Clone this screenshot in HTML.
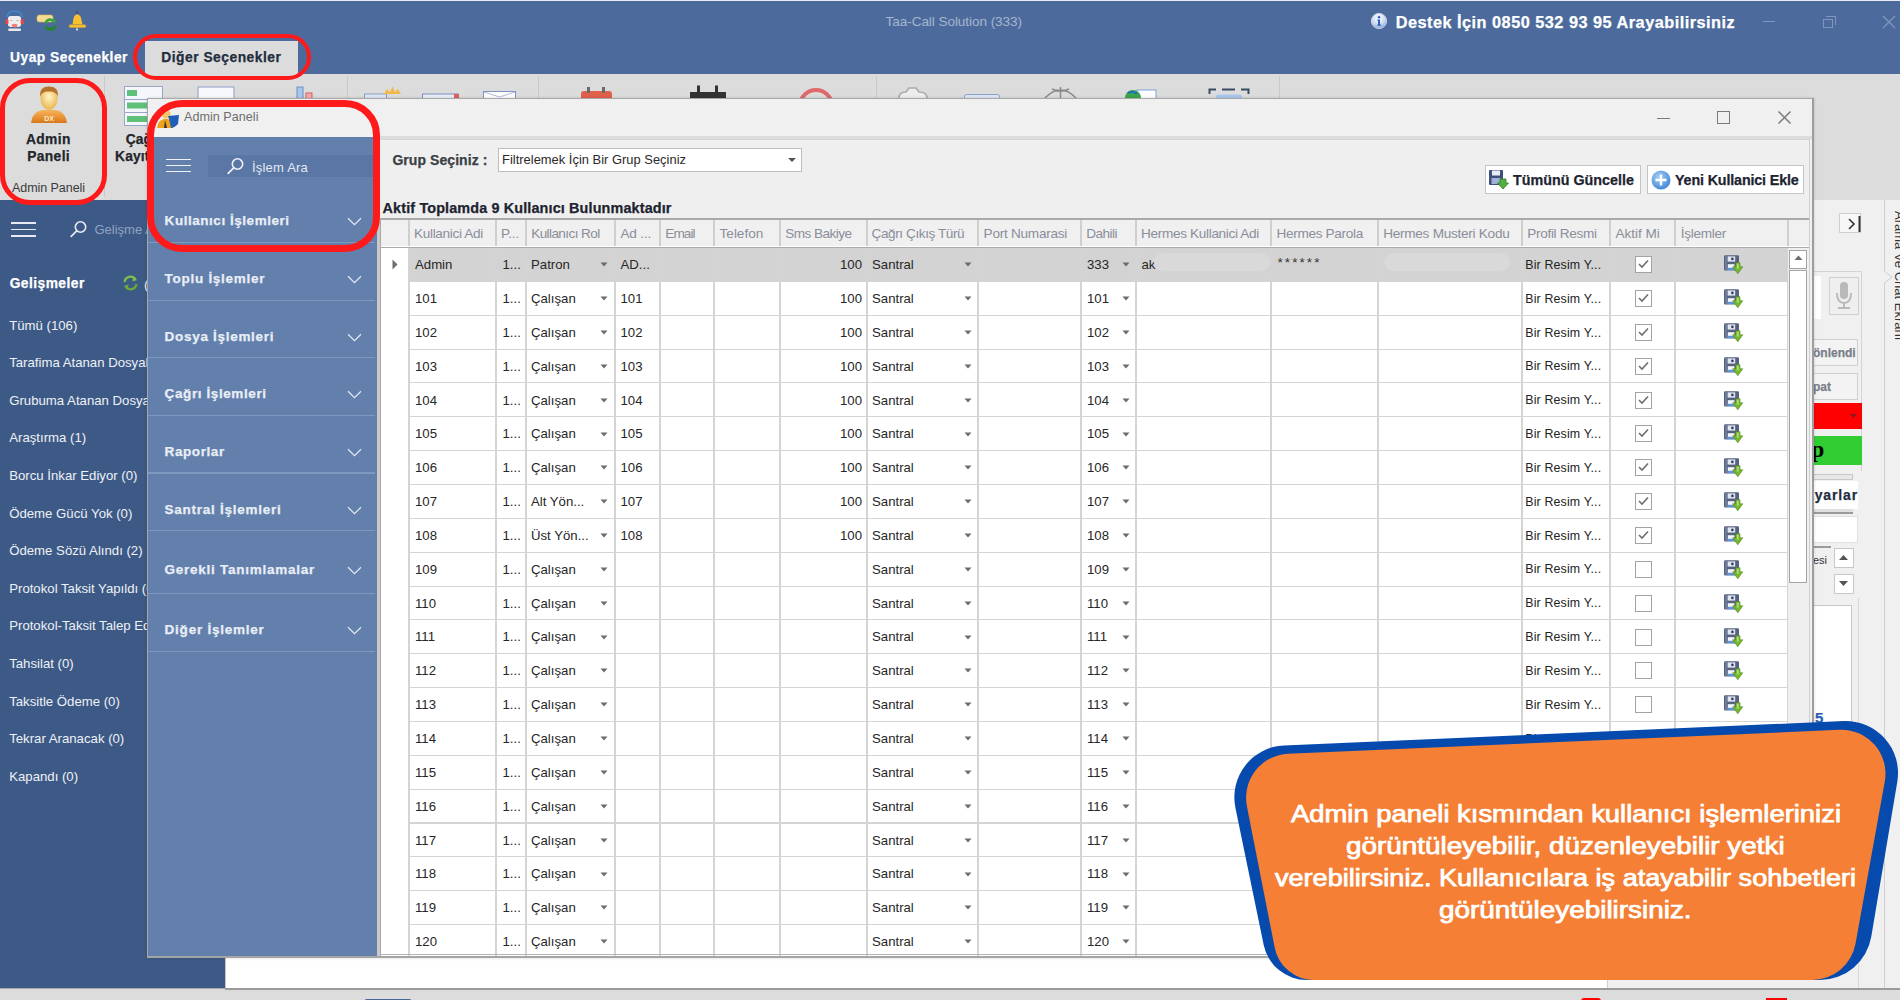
<!DOCTYPE html>
<html><head><meta charset="utf-8"><title>Admin Paneli</title><style>*{box-sizing:border-box;margin:0;padding:0}
html,body{width:1900px;height:1000px;overflow:hidden;background:#dcdcdc;font-family:"Liberation Sans",sans-serif;position:relative}
.a{position:absolute}
.t{position:absolute;white-space:nowrap;line-height:1}
</style></head><body>
<div class="a" style="left:0;top:0;width:1900px;height:1px;background:#e9edf3"></div>
<div class="a" style="left:0;top:1px;width:1900px;height:72.5px;background:#4c6b9c"></div>
<svg class="a" style="left:0;top:0" width="100" height="40" viewBox="0 0 100 40">
      <path d="M7.2 17 Q7.2 11.2 14.6 11.2 Q22 11.2 22 17" fill="none" stroke="#3a8ccc" stroke-width="1.6"/>
      <rect x="7.9" y="16" width="13.2" height="11" rx="3" fill="#eeeeee"/>
      <rect x="5.3" y="19.3" width="3.2" height="5" rx="1.3" fill="#e84848"/>
      <rect x="20.6" y="19.3" width="3.2" height="5" rx="1.3" fill="#e84848"/>
      <path d="M10.5 20.5 H12.5 M16.5 20.5 H18.5" stroke="#9a9a9a" stroke-width="0.8"/>
      <ellipse cx="14.6" cy="25.6" rx="2.9" ry="1.8" fill="#f27a7a"/>
      <rect x="8.2" y="28.4" width="12.8" height="2.6" rx="1" fill="#e9e9e9"/>
      <rect x="37" y="15" width="16" height="7" rx="2.5" fill="#f6dc92" stroke="#e2b65a" stroke-width="0.6"/>
      <path d="M45.8 23 A4.7 4.7 0 0 1 54.2 21.6" fill="none" stroke="#3aa53c" stroke-width="2.8"/><path d="M55.2 26 A4.7 4.7 0 0 1 46.8 27.4" fill="none" stroke="#23882a" stroke-width="2.8"/><path d="M52.3 19.2 L56.3 20.6 L54.2 24.2Z" fill="#3aa53c"/><path d="M48.7 29.8 L44.7 28.4 L46.8 24.8Z" fill="#23882a"/>
      <circle cx="77" cy="12.5" r="1.2" fill="none" stroke="#444" stroke-width="0.7"/>
      <path d="M73 24.2 Q73.5 14.5 77 14.5 Q80.5 14.5 81.8 24.2Z" fill="#f7c531"/>
      <path d="M70.8 24.2 L83.4 24.2 L81.8 20 Q81 16 77 14.5" fill="none"/>
      <path d="M72.5 24.2 L74 17 Q75.5 14.6 77 14.6 Q79 14.6 80.8 17 L82.4 24.2Z" fill="#f6c22e"/>
      <rect x="69.2" y="24.7" width="16.6" height="2.8" rx="1.2" fill="#f3bf36" stroke="#e0a22a" stroke-width="0.5"/>
      <rect x="76" y="28.4" width="2" height="2" fill="#d8d8d8"/>
    </svg>
<div class="t" style="left:885.50px;top:14.79px;font-size:13.6px;color:#a5b5cf;letter-spacing:-0.077px;">Taa-Call Solution (333)</div>
<svg class="a" style="left:1370px;top:12px" width="18" height="18" viewBox="0 0 18 18"><defs><radialGradient id="gi" cx="0.45" cy="0.3" r="0.75"><stop offset="0" stop-color="#ffffff"/><stop offset="0.6" stop-color="#c9d8f0"/><stop offset="1" stop-color="#6f95d2"/></radialGradient></defs><circle cx="9" cy="9" r="7.6" fill="url(#gi)" stroke="#dfe6f2" stroke-width="0.8"/><circle cx="9" cy="5.3" r="1.3" fill="#2d62b8"/><path d="M7.4 7.6 H10 V12.6 H11 V13.8 H7.2 V12.6 H8.1 V8.8 H7.4Z" fill="#2d62b8"/></svg>
<div class="t" style="left:1395.70px;top:13.50px;font-size:16.3px;color:#ffffff;font-weight:700;letter-spacing:0.491px;-webkit-text-stroke-width:0.25px;">Destek İçin 0850 532 93 95 Arayabilirsiniz</div>
<div class="a" style="left:1763px;top:21px;width:12px;height:1.3px;background:#7f95bb"></div>
<div class="a" style="left:1823px;top:19px;width:10px;height:9px;border:1.3px solid #7f95bb"></div><div class="a" style="left:1826px;top:16px;width:10px;height:9px;border-top:1.3px solid #7f95bb;border-right:1.3px solid #7f95bb"></div>
<svg class="a" style="left:1881px;top:14px" width="16" height="16" viewBox="0 0 16 16"><path d="M2 2L14 14M14 2L2 14" stroke="#7f95bb" stroke-width="1.4"/></svg>
<div class="t" style="left:10.00px;top:51.02px;font-size:13.8px;color:#ffffff;font-weight:700;letter-spacing:0.503px;-webkit-text-stroke-width:0.25px;">Uyap Seçenekler</div>
<div class="a" style="left:145px;top:41px;width:153px;height:33px;background:#dcdcdc"></div>
<div class="t" style="left:161.30px;top:50.72px;font-size:13.8px;color:#1f2d3d;font-weight:700;letter-spacing:0.501px;-webkit-text-stroke-width:0.25px;">Diğer Seçenekler</div>
<div class="a" style="left:0;top:73.5px;width:1900px;height:126px;background:#dcdcdc"></div>
<div class="a" style="left:104px;top:76px;width:1px;height:121px;background:#c9c9c9"></div>
<div class="a" style="left:347px;top:76px;width:1px;height:121px;background:#c9c9c9"></div>
<div class="a" style="left:538px;top:76px;width:1px;height:121px;background:#c9c9c9"></div>
<div class="a" style="left:876px;top:76px;width:1px;height:121px;background:#c9c9c9"></div>
<div class="a" style="left:1279px;top:76px;width:1px;height:121px;background:#c9c9c9"></div>
<svg class="a" style="left:28px;top:85px" width="42" height="42" viewBox="0 0 42 42">
      <defs><linearGradient id="gb" x1="0" y1="0" x2="0" y2="1"><stop offset="0" stop-color="#f7b45a"/><stop offset="1" stop-color="#d9781c"/></linearGradient>
      <radialGradient id="gf" cx="0.5" cy="0.4" r="0.6"><stop offset="0" stop-color="#fff6c8"/><stop offset="1" stop-color="#e9b54c"/></radialGradient></defs>
      <path d="M3 38 Q4 27 14 25 L28 25 Q38 27 39 38 Z" fill="url(#gb)"/>
      <ellipse cx="21" cy="14" rx="8.5" ry="11" fill="url(#gf)"/>
      <path d="M12 12 Q11 1 21 1.5 Q31 1 30 12 Q28 6 21 6.5 Q14 6 12 12Z" fill="#b8732b"/>
      <text x="21" y="36" font-size="7" font-family="Liberation Sans" font-weight="700" fill="#fde9c0" text-anchor="middle">DX</text>
    </svg>
<div class="t" style="left:26.00px;top:133.32px;font-size:13.8px;color:#22262b;font-weight:700;letter-spacing:0.356px;-webkit-text-stroke-width:0.25px;">Admin</div>
<div class="t" style="left:27.30px;top:150.02px;font-size:13.8px;color:#22262b;font-weight:700;letter-spacing:0.341px;-webkit-text-stroke-width:0.25px;">Paneli</div>
<div class="t" style="left:12.00px;top:182.42px;font-size:12.5px;color:#3a3a3a;letter-spacing:-0.055px;">Admin Paneli</div>
<svg class="a" style="left:124px;top:86px" width="40" height="40" viewBox="0 0 40 40">
      <rect x="0.5" y="0.5" width="38" height="39" fill="#f4f6fb" stroke="#9aa6c8"/>
      <rect x="0.5" y="13" width="38" height="1" fill="#9aa6c8"/><rect x="0.5" y="26" width="38" height="1" fill="#9aa6c8"/>
      <rect x="3" y="4" width="10" height="6" fill="#5fc07a"/>
      <rect x="3" y="16.5" width="33" height="6" fill="#5fc07a"/>
      <rect x="3" y="30" width="33" height="6" fill="#5fc07a"/>
    </svg>
<div class="t" style="left:125.70px;top:133.32px;font-size:13.8px;color:#22262b;font-weight:700;letter-spacing:0.144px;-webkit-text-stroke-width:0.25px;">Çağrı</div>
<div class="t" style="left:115.00px;top:150.02px;font-size:13.8px;color:#22262b;font-weight:700;letter-spacing:0.172px;-webkit-text-stroke-width:0.25px;">Kayıtları</div>
<svg class="a" style="left:0;top:84px" width="1300" height="14" viewBox="0 0 1300 14">
      <rect x="198" y="3" width="36" height="12" fill="#f6f8fc" stroke="#8e9cc4"/>
      <rect x="297" y="3" width="6" height="12" fill="#a9c7ee" stroke="#6f8fc3"/>
      <rect x="306" y="9" width="6" height="6" fill="#f4a9a9" stroke="#d46060"/>
      <rect x="364.5" y="10" width="22" height="6" fill="#dfe6f4" stroke="#8e9cc4"/>
      <path d="M384 10 L387 5 L390 8 L392.5 2.5 L395 8 L398 5 L401 10Z" fill="#f2b84b"/>
      <rect x="422.5" y="10" width="36" height="6" fill="#e9eef8" stroke="#7b8fc0"/>
      <rect x="454" y="10" width="5" height="5" fill="#e06060"/>
      <rect x="483.5" y="7.5" width="32" height="8" fill="#ffffff" stroke="#7f93c6"/>
      <path d="M484 8 L499.5 13 L515 8" fill="none" stroke="#9aa8d0" stroke-width="0.8"/>
      <rect x="581" y="7" width="31" height="10" rx="3" fill="#e0604c"/>
      <rect x="587" y="3" width="3" height="6" fill="#6b6b6b"/><rect x="602" y="3" width="3" height="6" fill="#6b6b6b"/>
      <rect x="690" y="8" width="36" height="8" fill="#333333"/>
      <rect x="697" y="1.5" width="3" height="7" fill="#333333"/><rect x="715" y="1.5" width="3" height="7" fill="#333333"/>
      <circle cx="816" cy="22" r="16" fill="none" stroke="#e06a6a" stroke-width="4"/>
      <path d="M899 14 Q899 8 906 8 L909 4 L916 4 L919 8 Q927 8 927 14" fill="#eeeeee" stroke="#a9a9a9" stroke-width="1.6"/>
      <rect x="964.5" y="10.5" width="35" height="6" rx="2" fill="#dfe6f4" stroke="#8aa0c8"/>
      <path d="M1045 14 Q1060.5 -2 1076 14 M1060.5 3 L1060.5 14 M1052 5 Q1060.5 9 1069 5" fill="none" stroke="#8a8a8a" stroke-width="1.5"/>
      <rect x="1137" y="6" width="19" height="10" fill="#fff" stroke="#7aa0d8"/>
      <circle cx="1133" cy="14" r="8" fill="#3ea44c"/><path d="M1128 9 Q1133 6 1137 10" stroke="#1f6fc0" stroke-width="2" fill="none"/>
      <path d="M1209.5 10 V5.5 H1216 M1222 5.5 H1235 M1241 5.5 H1248.5 V10" fill="none" stroke="#394a64" stroke-width="2"/>
      <rect x="1216" y="10.5" width="26" height="6" rx="2" fill="#a9c7ee"/>
    </svg>
<div class="a" style="left:0;top:199.5px;width:225px;height:789.5px;background:#3d5a86"></div>
<div class="a" style="left:10.5px;top:222px;width:25.5px;height:1.6px;background:#e6ebf3"></div>
<div class="a" style="left:10.5px;top:228.5px;width:25.5px;height:1.6px;background:#e6ebf3"></div>
<div class="a" style="left:10.5px;top:235px;width:25.5px;height:1.6px;background:#e6ebf3"></div>
<svg class="a" style="left:70px;top:220px" width="18" height="18" viewBox="0 0 18 18"><circle cx="10.5" cy="7" r="5.2" fill="none" stroke="#e6ebf3" stroke-width="1.6"/><path d="M6.7 10.8 L1.2 16.3" stroke="#e6ebf3" stroke-width="1.8" stroke-linecap="round"/></svg>
<div class="t" style="left:94.50px;top:223.00px;font-size:13px;color:#8fa3c3;">Gelişme Ara</div>
<div class="t" style="left:9.70px;top:277.32px;font-size:13.8px;color:#ffffff;font-weight:700;letter-spacing:0.444px;-webkit-text-stroke-width:0.25px;">Gelişmeler</div>
<svg class="a" style="left:122px;top:275px" width="17" height="16" viewBox="0 0 17 16"><path d="M2.5 7 A6 6 0 0 1 13.5 4.5" fill="none" stroke="#7cc04a" stroke-width="2.2"/><path d="M11 1.5 L15 5 L10.5 6.5Z" fill="#7cc04a"/><path d="M14.5 9 A6 6 0 0 1 3.5 11.5" fill="none" stroke="#6aaa3a" stroke-width="2.2"/><path d="M6 14.5 L2 11 L6.5 9.5Z" fill="#6aaa3a"/></svg>
<div class="t" style="left:144.00px;top:277.66px;font-size:13.4px;color:#eef1f6;">(</div>
<div class="t" style="left:9.20px;top:318.63px;font-size:13.2px;color:#eef1f6;">Tümü (106)</div>
<div class="t" style="left:9.20px;top:356.23px;font-size:13.2px;color:#eef1f6;">Tarafima Atanan Dosyalar</div>
<div class="t" style="left:9.20px;top:393.83px;font-size:13.2px;color:#eef1f6;">Grubuma Atanan Dosyalar</div>
<div class="t" style="left:9.20px;top:431.43px;font-size:13.2px;color:#eef1f6;">Araştırma (1)</div>
<div class="t" style="left:9.20px;top:469.03px;font-size:13.2px;color:#eef1f6;">Borcu İnkar Ediyor (0)</div>
<div class="t" style="left:9.20px;top:506.63px;font-size:13.2px;color:#eef1f6;">Ödeme Gücü Yok (0)</div>
<div class="t" style="left:9.20px;top:544.23px;font-size:13.2px;color:#eef1f6;">Ödeme Sözü Alındı (2)</div>
<div class="t" style="left:9.20px;top:581.83px;font-size:13.2px;color:#eef1f6;">Protokol Taksit Yapıldı (0)</div>
<div class="t" style="left:9.20px;top:619.43px;font-size:13.2px;color:#eef1f6;">Protokol-Taksit Talep Edildi</div>
<div class="t" style="left:9.20px;top:657.03px;font-size:13.2px;color:#eef1f6;">Tahsilat (0)</div>
<div class="t" style="left:9.20px;top:694.63px;font-size:13.2px;color:#eef1f6;">Taksitle Ödeme (0)</div>
<div class="t" style="left:9.20px;top:732.23px;font-size:13.2px;color:#eef1f6;">Tekrar Aranacak (0)</div>
<div class="t" style="left:9.20px;top:769.83px;font-size:13.2px;color:#eef1f6;">Kapandı (0)</div>
<div class="a" style="left:225px;top:199.5px;width:1382px;height:789px;background:#ffffff;border-left:1px solid #c8c8c8"></div>
<div class="a" style="left:1607px;top:199.5px;width:293px;height:789px;background:#f0f0f0;border-left:1px solid #cfcfcf"></div>
<div class="a" style="left:1884px;top:199.5px;width:1px;height:789px;background:#d0d0d0"></div>
<div class="a" style="left:0;top:988px;width:1900px;height:12px;background:#dcdcdc;border-top:1.5px solid #a9a9a9"></div>
<div class="a" style="left:225px;top:988px;width:1675px;height:2px;background:#9a9a9a"></div>
<div class="a" style="left:364px;top:998.8px;width:48px;height:6px;border-radius:3px;background:#4a6796"></div>
<div class="a" style="left:1581px;top:998px;width:20px;height:6px;border-radius:4px;background:#fe0000"></div>
<div class="a" style="left:1766px;top:998px;width:21px;height:6px;background:#fe0000"></div>
<div class="a" style="left:1839px;top:213px;width:22px;height:20px;background:#f7f7f7;border:1px solid #cfcfcf"></div>
<svg class="a" style="left:1843px;top:216px" width="18" height="16" viewBox="0 0 18 16"><path d="M6 3 L11 8 L6 13" fill="none" stroke="#333" stroke-width="1.6"/><rect x="15.5" y="0" width="2" height="16" fill="#333"/></svg>
<div class="t" style="left:1894px;top:211px;font-size:13px;color:#333;transform-origin:0 0;transform:rotate(90deg) translate(0,-12px);">Arama Ve Chat Ekranı</div>
<svg class="a" style="left:1884px;top:255px" width="10" height="40" viewBox="0 0 10 40"><path d="M0 0 L0 16 L8 22 L0 28 L0 40" fill="#f0f0f0" stroke="#cfcfcf"/></svg>
<div class="a" style="left:1800px;top:271px;width:62px;height:200px;border:1px solid #d4d4d4;border-left:none;border-bottom:none"></div><div class="a" style="left:1857.5px;top:598px;width:1px;height:390px;background:#d8d8d8"></div>
<div class="a" style="left:1800px;top:276px;width:20.5px;height:43px;background:#ffffff"></div>
<div class="a" style="left:1828.5px;top:277px;width:30px;height:38px;background:#efefef;border:1px solid #cfcfcf"></div>
<svg class="a" style="left:1833.5px;top:281px" width="20" height="30" viewBox="0 0 20 30"><rect x="6" y="1" width="8" height="17" rx="4" fill="#b9b9b9"/><path d="M3 12 Q3 22 10 22 Q17 22 17 12" fill="none" stroke="#b9b9b9" stroke-width="2"/><rect x="9" y="22" width="2" height="4" fill="#b9b9b9"/><rect x="4" y="26" width="12" height="2" fill="#b9b9b9"/></svg>
<div class="a" style="left:1790px;top:339px;width:68px;height:27px;background:#f3f3f3;border:1px solid #d0d0d0"></div>
<div class="t" style="left:1813.00px;top:346.84px;font-size:12px;color:#7a7f8a;font-weight:700;-webkit-text-stroke-width:0.25px;">önlendi</div>
<div class="a" style="left:1790px;top:373px;width:68px;height:27px;background:#f3f3f3;border:1px solid #d0d0d0"></div>
<div class="t" style="left:1813.00px;top:380.84px;font-size:12px;color:#7a7f8a;font-weight:700;-webkit-text-stroke-width:0.25px;">pat</div>
<div class="a" style="left:1800px;top:403px;width:61.5px;height:25.7px;background:#fe0000"></div>
<svg class="a" style="left:1850px;top:414px" width="8" height="5"><path d="M0 0H7L3.5 4Z" fill="#8a1a1a"/></svg>
<div class="a" style="left:1800px;top:436px;width:62px;height:29px;background:#32cd32"></div>
<div class="t" style="left:1811.00px;top:437.18px;font-size:24px;color:#000;font-weight:700;font-family:'Liberation Serif',serif;">p</div>
<div class="a" style="left:1790px;top:474px;width:63px;height:6px;background:#e8e8e8;border:1px solid #c8c8c8"></div>
<div class="a" style="left:1790px;top:481px;width:68px;height:28px;background:#ffffff"></div>
<div class="t" style="left:1806.00px;top:488.15px;font-size:14px;color:#1f2d3d;font-weight:700;letter-spacing:0.866px;-webkit-text-stroke-width:0.25px;">ayarlar</div>
<div class="a" style="left:1790px;top:509px;width:63px;height:5px;background:#e0e0e0;border-bottom:2px solid #9a9a9a"></div>
<div class="a" style="left:1790px;top:516px;width:68px;height:27px;background:#fff;border:1px solid #e0e0e0"></div>
<div class="a" style="left:1805px;top:546px;width:26px;height:2px;background:#9a9a9a"></div>
<div class="t" style="left:1813.00px;top:554.69px;font-size:11px;color:#333;">esi</div>
<div class="a" style="left:1834px;top:548px;width:20px;height:20px;background:#fff;border:1px solid #c8c8c8"></div>
<svg class="a" style="left:1839px;top:555px" width="10" height="6"><path d="M0 5H9L4.5 0Z" fill="#555"/></svg>
<div class="a" style="left:1834px;top:574px;width:20px;height:20px;background:#fff;border:1px solid #c8c8c8"></div>
<svg class="a" style="left:1839px;top:581px" width="10" height="6"><path d="M0 0H9L4.5 5Z" fill="#555"/></svg>
<div class="a" style="left:1800px;top:605px;width:52px;height:360px;background:#fff;border:1px solid #c8c8c8;border-left:none"></div>
<div class="t" style="left:1815.00px;top:710.30px;font-size:15px;color:#2b5fb4;font-weight:700;-webkit-text-stroke-width:0.25px;">5</div>
<div class="a" style="left:147px;top:97.5px;width:1666.5px;height:860.5px;background:#f0f0f0;border:1px solid #a8a8a8;box-shadow:0 0 3px rgba(0,0,0,0.15)"></div>
<svg class="a" style="left:156px;top:107px" width="24" height="22" viewBox="0 0 24 22">
      <path d="M1 21 Q2 13 8 12 L12 12 Q16 13 17 21Z" fill="#f0a21c"/>
      <circle cx="10" cy="7" r="4.5" fill="#f3c56a"/>
      <path d="M12 9 L23 8 L22 17 Q18 21 15 21 L13 12Z" fill="#1f5fb8"/>
      <path d="M9 13 L11 21 L8 21Z" fill="#333"/>
    </svg>
<div class="t" style="left:184.00px;top:111.33px;font-size:12.6px;color:#6e6e6e;letter-spacing:0.023px;">Admin Paneli</div>
<div class="a" style="left:1657px;top:117.5px;width:12.5px;height:1.2px;background:#7a7a7a"></div>
<div class="a" style="left:1717px;top:111px;width:13px;height:13px;border:1.4px solid #7a7a7a"></div>
<svg class="a" style="left:1777px;top:110px" width="15" height="15" viewBox="0 0 15 15"><path d="M1.5 1.5L13.5 13.5M13.5 1.5L1.5 13.5" stroke="#7a7a7a" stroke-width="1.5"/></svg>
<div class="a" style="left:377px;top:136px;width:1436px;height:2.5px;background:#dcdcdc"></div>
<div class="a" style="left:378px;top:138.5px;width:1432px;height:819px;background:#efefef;border-top:1px solid #d6d6d6;border-right:1px solid #d0d0d0"></div>
<div class="a" style="left:147.5px;top:136.5px;width:230px;height:821.5px;background:#6380ad"></div>
<div class="a" style="left:377px;top:136.5px;width:3px;height:821.5px;background:#c9c9c9"></div>
<div class="a" style="left:165.5px;top:158.7px;width:25.3px;height:1.6px;background:#eef1f7"></div>
<div class="a" style="left:165.5px;top:164.7px;width:25.3px;height:1.6px;background:#eef1f7"></div>
<div class="a" style="left:165.5px;top:170.7px;width:25.3px;height:1.6px;background:#eef1f7"></div>
<div class="a" style="left:208px;top:155.3px;width:169px;height:22px;background:#5a76a4"></div>
<svg class="a" style="left:227px;top:157px" width="18" height="18" viewBox="0 0 18 18"><circle cx="10.5" cy="7" r="5.2" fill="none" stroke="#eef1f7" stroke-width="1.6"/><path d="M6.7 10.8 L1.2 16.3" stroke="#eef1f7" stroke-width="1.8" stroke-linecap="round"/></svg>
<div class="t" style="left:252.00px;top:160.50px;font-size:13px;color:#e4e9f2;letter-spacing:0.201px;">İşlem Ara</div>
<div class="t" style="left:164.60px;top:213.57px;font-size:13.5px;color:#e9eef6;font-weight:700;letter-spacing:0.537px;-webkit-text-stroke-width:0.25px;">Kullanıcı İşlemleri</div>
<svg class="a" style="left:346.5px;top:217px" width="15" height="9" viewBox="0 0 15 9"><path d="M1 1.2 L7.5 7.6 L14 1.2" fill="none" stroke="#e3e9f3" stroke-width="1.2"/></svg>
<div class="a" style="left:148px;top:242.0px;width:227px;height:1.3px;background:#7f98c0"></div>
<div class="t" style="left:164.60px;top:271.57px;font-size:13.5px;color:#e9eef6;font-weight:700;letter-spacing:0.719px;-webkit-text-stroke-width:0.25px;">Toplu İşlemler</div>
<svg class="a" style="left:346.5px;top:275px" width="15" height="9" viewBox="0 0 15 9"><path d="M1 1.2 L7.5 7.6 L14 1.2" fill="none" stroke="#e3e9f3" stroke-width="1.2"/></svg>
<div class="a" style="left:148px;top:299.5px;width:227px;height:1.3px;background:#7f98c0"></div>
<div class="t" style="left:164.60px;top:329.57px;font-size:13.5px;color:#e9eef6;font-weight:700;letter-spacing:0.702px;-webkit-text-stroke-width:0.25px;">Dosya İşlemleri</div>
<svg class="a" style="left:346.5px;top:333px" width="15" height="9" viewBox="0 0 15 9"><path d="M1 1.2 L7.5 7.6 L14 1.2" fill="none" stroke="#e3e9f3" stroke-width="1.2"/></svg>
<div class="a" style="left:148px;top:357.2px;width:227px;height:1.3px;background:#7f98c0"></div>
<div class="t" style="left:164.60px;top:386.57px;font-size:13.5px;color:#e9eef6;font-weight:700;letter-spacing:0.597px;-webkit-text-stroke-width:0.25px;">Çağrı İşlemleri</div>
<svg class="a" style="left:346.5px;top:390px" width="15" height="9" viewBox="0 0 15 9"><path d="M1 1.2 L7.5 7.6 L14 1.2" fill="none" stroke="#e3e9f3" stroke-width="1.2"/></svg>
<div class="a" style="left:148px;top:414.8px;width:227px;height:1.3px;background:#7f98c0"></div>
<div class="t" style="left:164.60px;top:444.57px;font-size:13.5px;color:#e9eef6;font-weight:700;letter-spacing:0.584px;-webkit-text-stroke-width:0.25px;">Raporlar</div>
<svg class="a" style="left:346.5px;top:448px" width="15" height="9" viewBox="0 0 15 9"><path d="M1 1.2 L7.5 7.6 L14 1.2" fill="none" stroke="#e3e9f3" stroke-width="1.2"/></svg>
<div class="a" style="left:148px;top:472.4px;width:227px;height:1.3px;background:#7f98c0"></div>
<div class="t" style="left:164.60px;top:502.57px;font-size:13.5px;color:#e9eef6;font-weight:700;letter-spacing:0.746px;-webkit-text-stroke-width:0.25px;">Santral İşlemleri</div>
<svg class="a" style="left:346.5px;top:506px" width="15" height="9" viewBox="0 0 15 9"><path d="M1 1.2 L7.5 7.6 L14 1.2" fill="none" stroke="#e3e9f3" stroke-width="1.2"/></svg>
<div class="a" style="left:148px;top:530.0px;width:227px;height:1.3px;background:#7f98c0"></div>
<div class="t" style="left:164.60px;top:562.57px;font-size:13.5px;color:#e9eef6;font-weight:700;letter-spacing:0.746px;-webkit-text-stroke-width:0.25px;">Gerekli Tanımlamalar</div>
<svg class="a" style="left:346.5px;top:566px" width="15" height="9" viewBox="0 0 15 9"><path d="M1 1.2 L7.5 7.6 L14 1.2" fill="none" stroke="#e3e9f3" stroke-width="1.2"/></svg>
<div class="a" style="left:148px;top:592.8px;width:227px;height:1.3px;background:#7f98c0"></div>
<div class="t" style="left:164.60px;top:622.57px;font-size:13.5px;color:#e9eef6;font-weight:700;letter-spacing:0.765px;-webkit-text-stroke-width:0.25px;">Diğer İşlemler</div>
<svg class="a" style="left:346.5px;top:626px" width="15" height="9" viewBox="0 0 15 9"><path d="M1 1.2 L7.5 7.6 L14 1.2" fill="none" stroke="#e3e9f3" stroke-width="1.2"/></svg>
<div class="a" style="left:148px;top:650.5px;width:227px;height:1.3px;background:#7f98c0"></div>
<div class="t" style="left:392.40px;top:153.15px;font-size:14px;color:#3b3f45;font-weight:700;letter-spacing:0.062px;-webkit-text-stroke-width:0.25px;">Grup Seçiniz :</div>
<div class="a" style="left:497.7px;top:147.7px;width:304px;height:24.5px;background:#fff;border:1px solid #bdbdbd"></div>
<div class="t" style="left:502.00px;top:154.08px;font-size:12.9px;color:#2a2a2a;letter-spacing:0.018px;">Filtrelemek İçin Bir Grup Seçiniz</div>
<svg class="a" style="left:788px;top:158px" width="9" height="5"><path d="M0 0H8L4 4Z" fill="#555"/></svg>
<div class="a" style="left:1484.7px;top:165.1px;width:156px;height:28.5px;background:#fff;border:1px solid #c4c4c4"></div>
<svg class="a" style="left:1488px;top:169px" width="21" height="21" viewBox="0 0 21 21">
      <rect x="1" y="1" width="14" height="15" rx="1" fill="#3d4f7a"/><rect x="4" y="1.5" width="8" height="5" fill="#e8ecf4"/><rect x="3.5" y="9" width="9" height="6" fill="#9fb2d6"/>
      <path d="M12 10 H18 V14 H20.5 L15 20 L9.5 14 H12Z" fill="#52b043" stroke="#2f7f24" stroke-width="0.8"/></svg>
<div class="t" style="left:1513.00px;top:172.90px;font-size:14.3px;color:#1d2430;font-weight:700;letter-spacing:0.017px;-webkit-text-stroke-width:0.25px;">Tümünü Güncelle</div>
<div class="a" style="left:1647px;top:165.1px;width:156.7px;height:28.5px;background:#fff;border:1px solid #c4c4c4"></div>
<svg class="a" style="left:1651px;top:170px" width="20" height="20" viewBox="0 0 20 20">
      <defs><radialGradient id="gc" cx="0.4" cy="0.35" r="0.7"><stop offset="0" stop-color="#a8d0f6"/><stop offset="1" stop-color="#3d84d6"/></radialGradient></defs>
      <circle cx="10" cy="10" r="9.5" fill="url(#gc)"/><path d="M10 4.5V15.5M4.5 10H15.5" stroke="#fff" stroke-width="2.4"/></svg>
<div class="t" style="left:1675.00px;top:172.90px;font-size:14.3px;color:#1d2430;font-weight:700;letter-spacing:-0.144px;-webkit-text-stroke-width:0.25px;">Yeni Kullanici Ekle</div>
<div class="t" style="left:382.60px;top:200.81px;font-size:14.4px;color:#1d2430;font-weight:700;letter-spacing:0.135px;-webkit-text-stroke-width:0.25px;">Aktif Toplamda 9 Kullanıcı Bulunmaktadır</div>
<div class="a" style="left:380px;top:217.5px;width:1429px;height:740.0px;background:#ffffff;border-left:1px solid #a9a9a9;border-top:2px solid #a9a9a9"></div>
<div class="a" style="left:381px;top:219.5px;width:1428px;height:26.5px;background:#f0f0f0"></div>
<div class="a" style="left:381px;top:246.5px;width:1428px;height:1.5px;background:#acacac"></div>
<div class="a" style="left:408.25px;top:219.5px;width:1.5px;height:26.5px;background:#cfcfcf"></div>
<div class="a" style="left:495.25px;top:219.5px;width:1.5px;height:26.5px;background:#cfcfcf"></div>
<div class="a" style="left:525.25px;top:219.5px;width:1.5px;height:26.5px;background:#cfcfcf"></div>
<div class="a" style="left:614.25px;top:219.5px;width:1.5px;height:26.5px;background:#cfcfcf"></div>
<div class="a" style="left:659.25px;top:219.5px;width:1.5px;height:26.5px;background:#cfcfcf"></div>
<div class="a" style="left:713.25px;top:219.5px;width:1.5px;height:26.5px;background:#cfcfcf"></div>
<div class="a" style="left:779.25px;top:219.5px;width:1.5px;height:26.5px;background:#cfcfcf"></div>
<div class="a" style="left:866.25px;top:219.5px;width:1.5px;height:26.5px;background:#cfcfcf"></div>
<div class="a" style="left:977.25px;top:219.5px;width:1.5px;height:26.5px;background:#cfcfcf"></div>
<div class="a" style="left:1080.25px;top:219.5px;width:1.5px;height:26.5px;background:#cfcfcf"></div>
<div class="a" style="left:1135.25px;top:219.5px;width:1.5px;height:26.5px;background:#cfcfcf"></div>
<div class="a" style="left:1270.25px;top:219.5px;width:1.5px;height:26.5px;background:#cfcfcf"></div>
<div class="a" style="left:1377.25px;top:219.5px;width:1.5px;height:26.5px;background:#cfcfcf"></div>
<div class="a" style="left:1521.25px;top:219.5px;width:1.5px;height:26.5px;background:#cfcfcf"></div>
<div class="a" style="left:1609.25px;top:219.5px;width:1.5px;height:26.5px;background:#cfcfcf"></div>
<div class="a" style="left:1674.25px;top:219.5px;width:1.5px;height:26.5px;background:#cfcfcf"></div>
<div class="a" style="left:1787.25px;top:219.5px;width:1.5px;height:26.5px;background:#cfcfcf"></div>
<div class="t" style="left:414.00px;top:227.29px;font-size:13.6px;color:#8a8e9a;letter-spacing:-0.332px;">Kullanici Adi</div>
<div class="t" style="left:500.90px;top:227.29px;font-size:13.6px;color:#8a8e9a;letter-spacing:-0.064px;">P...</div>
<div class="t" style="left:531.20px;top:227.29px;font-size:13.6px;color:#8a8e9a;letter-spacing:-0.609px;">Kullanıcı Rol</div>
<div class="t" style="left:620.40px;top:227.29px;font-size:13.6px;color:#8a8e9a;letter-spacing:-0.156px;">Ad ...</div>
<div class="t" style="left:665.30px;top:227.29px;font-size:13.6px;color:#8a8e9a;letter-spacing:-0.920px;">Email</div>
<div class="t" style="left:719.60px;top:227.29px;font-size:13.6px;color:#8a8e9a;letter-spacing:-0.035px;">Telefon</div>
<div class="t" style="left:785.30px;top:227.29px;font-size:13.6px;color:#8a8e9a;letter-spacing:-0.547px;">Sms Bakiye</div>
<div class="t" style="left:871.60px;top:227.29px;font-size:13.6px;color:#8a8e9a;letter-spacing:-0.429px;">Çağrı Çıkış Türü</div>
<div class="t" style="left:983.60px;top:227.29px;font-size:13.6px;color:#8a8e9a;letter-spacing:-0.260px;">Port Numarasi</div>
<div class="t" style="left:1086.30px;top:227.29px;font-size:13.6px;color:#8a8e9a;letter-spacing:-0.567px;">Dahili</div>
<div class="t" style="left:1141.10px;top:227.29px;font-size:13.6px;color:#8a8e9a;letter-spacing:-0.339px;">Hermes Kullanici Adi</div>
<div class="t" style="left:1276.50px;top:227.29px;font-size:13.6px;color:#8a8e9a;letter-spacing:-0.320px;">Hermes Parola</div>
<div class="t" style="left:1383.20px;top:227.29px;font-size:13.6px;color:#8a8e9a;letter-spacing:-0.271px;">Hermes Musteri Kodu</div>
<div class="t" style="left:1527.30px;top:227.29px;font-size:13.6px;color:#8a8e9a;letter-spacing:-0.330px;">Profil Resmi</div>
<div class="t" style="left:1615.50px;top:227.29px;font-size:13.6px;color:#8a8e9a;letter-spacing:-0.045px;">Aktif Mi</div>
<div class="t" style="left:1680.70px;top:227.29px;font-size:13.6px;color:#8a8e9a;letter-spacing:-0.287px;">İşlemler</div>
<div class="a" style="left:409px;top:248.0px;width:1379px;height:32.85px;background:#d3d3d3"></div>
<div class="a" style="left:409px;top:280.85px;width:1379px;height:1.1px;background:#d4d4d4"></div>
<div class="a" style="left:409px;top:314.70px;width:1379px;height:1.1px;background:#d4d4d4"></div>
<div class="a" style="left:409px;top:348.55px;width:1379px;height:1.1px;background:#d4d4d4"></div>
<div class="a" style="left:409px;top:382.40px;width:1379px;height:1.1px;background:#d4d4d4"></div>
<div class="a" style="left:409px;top:416.25px;width:1379px;height:1.1px;background:#d4d4d4"></div>
<div class="a" style="left:409px;top:450.10px;width:1379px;height:1.1px;background:#d4d4d4"></div>
<div class="a" style="left:409px;top:483.95px;width:1379px;height:1.1px;background:#d4d4d4"></div>
<div class="a" style="left:409px;top:517.80px;width:1379px;height:1.1px;background:#d4d4d4"></div>
<div class="a" style="left:409px;top:551.65px;width:1379px;height:1.1px;background:#d4d4d4"></div>
<div class="a" style="left:409px;top:585.50px;width:1379px;height:1.1px;background:#d4d4d4"></div>
<div class="a" style="left:409px;top:619.35px;width:1379px;height:1.1px;background:#d4d4d4"></div>
<div class="a" style="left:409px;top:653.20px;width:1379px;height:1.1px;background:#d4d4d4"></div>
<div class="a" style="left:409px;top:687.05px;width:1379px;height:1.1px;background:#d4d4d4"></div>
<div class="a" style="left:409px;top:720.90px;width:1379px;height:1.1px;background:#d4d4d4"></div>
<div class="a" style="left:409px;top:754.75px;width:1379px;height:1.1px;background:#d4d4d4"></div>
<div class="a" style="left:409px;top:788.60px;width:1379px;height:1.1px;background:#d4d4d4"></div>
<div class="a" style="left:409px;top:822.45px;width:1379px;height:1.1px;background:#d4d4d4"></div>
<div class="a" style="left:409px;top:856.30px;width:1379px;height:1.1px;background:#d4d4d4"></div>
<div class="a" style="left:409px;top:890.15px;width:1379px;height:1.1px;background:#d4d4d4"></div>
<div class="a" style="left:409px;top:924.00px;width:1379px;height:1.1px;background:#d4d4d4"></div>
<div class="a" style="left:408.4px;top:248.0px;width:1.2px;height:710.0px;background:#d4d4d4"></div>
<div class="a" style="left:495.4px;top:248.0px;width:1.2px;height:710.0px;background:#d4d4d4"></div>
<div class="a" style="left:525.4px;top:248.0px;width:1.2px;height:710.0px;background:#d4d4d4"></div>
<div class="a" style="left:614.4px;top:248.0px;width:1.2px;height:710.0px;background:#d4d4d4"></div>
<div class="a" style="left:659.4px;top:248.0px;width:1.2px;height:710.0px;background:#d4d4d4"></div>
<div class="a" style="left:713.4px;top:248.0px;width:1.2px;height:710.0px;background:#d4d4d4"></div>
<div class="a" style="left:779.4px;top:248.0px;width:1.2px;height:710.0px;background:#d4d4d4"></div>
<div class="a" style="left:866.4px;top:248.0px;width:1.2px;height:710.0px;background:#d4d4d4"></div>
<div class="a" style="left:977.4px;top:248.0px;width:1.2px;height:710.0px;background:#d4d4d4"></div>
<div class="a" style="left:1080.4px;top:248.0px;width:1.2px;height:710.0px;background:#d4d4d4"></div>
<div class="a" style="left:1135.4px;top:248.0px;width:1.2px;height:710.0px;background:#d4d4d4"></div>
<div class="a" style="left:1270.4px;top:248.0px;width:1.2px;height:710.0px;background:#d4d4d4"></div>
<div class="a" style="left:1377.4px;top:248.0px;width:1.2px;height:710.0px;background:#d4d4d4"></div>
<div class="a" style="left:1521.4px;top:248.0px;width:1.2px;height:710.0px;background:#d4d4d4"></div>
<div class="a" style="left:1609.4px;top:248.0px;width:1.2px;height:710.0px;background:#d4d4d4"></div>
<div class="a" style="left:1674.4px;top:248.0px;width:1.2px;height:710.0px;background:#d4d4d4"></div>
<div class="a" style="left:1787.4px;top:248.0px;width:1.2px;height:710.0px;background:#d4d4d4"></div>
<svg class="a" style="left:392px;top:259px" width="6" height="11"><path d="M0.5 0.5L5.5 5.5L0.5 10.5Z" fill="#6e6e6e"/></svg>
<div class="t" style="left:415.00px;top:258.13px;font-size:13.2px;color:#262626;">Admin</div>
<div class="t" style="left:502.50px;top:258.13px;font-size:13.2px;color:#262626;">1...</div>
<div class="t" style="left:531.00px;top:258.13px;font-size:13.2px;color:#262626;">Patron</div>
<svg class="a" style="left:600.0px;top:262.2px" width="8" height="5"><path d="M0.5 0.5H7.5L4 4.5Z" fill="#6b6b6b"/></svg>
<div class="t" style="left:620.50px;top:258.13px;font-size:13.2px;color:#262626;">AD...</div>
<div class="t" style="left:839.98px;top:258.13px;font-size:13.2px;color:#262626;">100</div>
<div class="t" style="left:872.00px;top:258.13px;font-size:13.2px;color:#262626;">Santral</div>
<svg class="a" style="left:963.5px;top:262.2px" width="8" height="5"><path d="M0.5 0.5H7.5L4 4.5Z" fill="#6b6b6b"/></svg>
<div class="t" style="left:1087.00px;top:258.13px;font-size:13.2px;color:#262626;">333</div>
<svg class="a" style="left:1122.0px;top:262.2px" width="8" height="5"><path d="M0.5 0.5H7.5L4 4.5Z" fill="#6b6b6b"/></svg>
<div class="t" style="left:1141.40px;top:258.13px;font-size:13.2px;color:#262626;">ak</div>
<div class="a" style="left:1154px;top:252.5px;width:116px;height:18.5px;border-radius:9px;background:#d9d9d9"></div>
<div class="t" style="left:1277.50px;top:256.37px;font-size:13.5px;color:#333333;letter-spacing:2.078px;">******</div>
<div class="a" style="left:1384px;top:252.5px;width:126px;height:18.5px;border-radius:9px;background:#d9d9d9"></div>
<div class="t" style="left:1525.30px;top:258.80px;font-size:12.4px;color:#222;letter-spacing:0.148px;">Bir Resim Y...</div>
<div class="a" style="left:1635px;top:256.23px;width:17px;height:17px;background:#fff;border:1.2px solid #a3a3a3"></div>
<svg class="a" style="left:1638px;top:259.23px" width="11" height="10" viewBox="0 0 11 10"><path d="M1 5 L4 8 L10 1.5" fill="none" stroke="#6e6e6e" stroke-width="1.6"/></svg>
<svg class="a" style="left:1724px;top:255.23px" width="20" height="20" viewBox="0 0 20 20">
          <rect x="0" y="0.2" width="15" height="15.3" rx="1.2" fill="#56627f"/><rect x="1" y="1" width="2" height="14" fill="#6e7a98"/>
          <rect x="3.6" y="1.4" width="7.6" height="5.2" fill="#dfe6f2"/><circle cx="8.4" cy="3.9" r="1.3" fill="#2f3a52"/>
          <rect x="3.8" y="9.2" width="6.6" height="6" fill="#f4f6fb"/><rect x="3.8" y="12.8" width="6.6" height="2.4" fill="#5f94d6"/>
          <path d="M11.7 7.7 H16 V11.8 H18.8 L13.8 18.8 L8.6 11.8 H11.7Z" fill="#74b62e" stroke="#4f8a1c" stroke-width="0.6"/>
          <rect x="12.8" y="8.6" width="2" height="5" fill="#c9e88f" opacity="0.7"/></svg>
<div class="t" style="left:415.00px;top:291.98px;font-size:13.2px;color:#262626;">101</div>
<div class="t" style="left:502.50px;top:291.98px;font-size:13.2px;color:#262626;">1...</div>
<div class="t" style="left:531.00px;top:291.98px;font-size:13.2px;color:#262626;">Çalışan</div>
<svg class="a" style="left:600.0px;top:296.1px" width="8" height="5"><path d="M0.5 0.5H7.5L4 4.5Z" fill="#6b6b6b"/></svg>
<div class="t" style="left:620.50px;top:291.98px;font-size:13.2px;color:#262626;">101</div>
<div class="t" style="left:839.98px;top:291.98px;font-size:13.2px;color:#262626;">100</div>
<div class="t" style="left:872.00px;top:291.98px;font-size:13.2px;color:#262626;">Santral</div>
<svg class="a" style="left:963.5px;top:296.1px" width="8" height="5"><path d="M0.5 0.5H7.5L4 4.5Z" fill="#6b6b6b"/></svg>
<div class="t" style="left:1087.00px;top:291.98px;font-size:13.2px;color:#262626;">101</div>
<svg class="a" style="left:1122.0px;top:296.1px" width="8" height="5"><path d="M0.5 0.5H7.5L4 4.5Z" fill="#6b6b6b"/></svg>
<div class="t" style="left:1525.30px;top:292.65px;font-size:12.4px;color:#222;letter-spacing:0.148px;">Bir Resim Y...</div>
<div class="a" style="left:1635px;top:290.08px;width:17px;height:17px;background:#fff;border:1.2px solid #a3a3a3"></div>
<svg class="a" style="left:1638px;top:293.08px" width="11" height="10" viewBox="0 0 11 10"><path d="M1 5 L4 8 L10 1.5" fill="none" stroke="#6e6e6e" stroke-width="1.6"/></svg>
<svg class="a" style="left:1724px;top:289.08px" width="20" height="20" viewBox="0 0 20 20">
          <rect x="0" y="0.2" width="15" height="15.3" rx="1.2" fill="#56627f"/><rect x="1" y="1" width="2" height="14" fill="#6e7a98"/>
          <rect x="3.6" y="1.4" width="7.6" height="5.2" fill="#dfe6f2"/><circle cx="8.4" cy="3.9" r="1.3" fill="#2f3a52"/>
          <rect x="3.8" y="9.2" width="6.6" height="6" fill="#f4f6fb"/><rect x="3.8" y="12.8" width="6.6" height="2.4" fill="#5f94d6"/>
          <path d="M11.7 7.7 H16 V11.8 H18.8 L13.8 18.8 L8.6 11.8 H11.7Z" fill="#74b62e" stroke="#4f8a1c" stroke-width="0.6"/>
          <rect x="12.8" y="8.6" width="2" height="5" fill="#c9e88f" opacity="0.7"/></svg>
<div class="t" style="left:415.00px;top:325.83px;font-size:13.2px;color:#262626;">102</div>
<div class="t" style="left:502.50px;top:325.83px;font-size:13.2px;color:#262626;">1...</div>
<div class="t" style="left:531.00px;top:325.83px;font-size:13.2px;color:#262626;">Çalışan</div>
<svg class="a" style="left:600.0px;top:329.9px" width="8" height="5"><path d="M0.5 0.5H7.5L4 4.5Z" fill="#6b6b6b"/></svg>
<div class="t" style="left:620.50px;top:325.83px;font-size:13.2px;color:#262626;">102</div>
<div class="t" style="left:839.98px;top:325.83px;font-size:13.2px;color:#262626;">100</div>
<div class="t" style="left:872.00px;top:325.83px;font-size:13.2px;color:#262626;">Santral</div>
<svg class="a" style="left:963.5px;top:329.9px" width="8" height="5"><path d="M0.5 0.5H7.5L4 4.5Z" fill="#6b6b6b"/></svg>
<div class="t" style="left:1087.00px;top:325.83px;font-size:13.2px;color:#262626;">102</div>
<svg class="a" style="left:1122.0px;top:329.9px" width="8" height="5"><path d="M0.5 0.5H7.5L4 4.5Z" fill="#6b6b6b"/></svg>
<div class="t" style="left:1525.30px;top:326.50px;font-size:12.4px;color:#222;letter-spacing:0.148px;">Bir Resim Y...</div>
<div class="a" style="left:1635px;top:323.93px;width:17px;height:17px;background:#fff;border:1.2px solid #a3a3a3"></div>
<svg class="a" style="left:1638px;top:326.93px" width="11" height="10" viewBox="0 0 11 10"><path d="M1 5 L4 8 L10 1.5" fill="none" stroke="#6e6e6e" stroke-width="1.6"/></svg>
<svg class="a" style="left:1724px;top:322.93px" width="20" height="20" viewBox="0 0 20 20">
          <rect x="0" y="0.2" width="15" height="15.3" rx="1.2" fill="#56627f"/><rect x="1" y="1" width="2" height="14" fill="#6e7a98"/>
          <rect x="3.6" y="1.4" width="7.6" height="5.2" fill="#dfe6f2"/><circle cx="8.4" cy="3.9" r="1.3" fill="#2f3a52"/>
          <rect x="3.8" y="9.2" width="6.6" height="6" fill="#f4f6fb"/><rect x="3.8" y="12.8" width="6.6" height="2.4" fill="#5f94d6"/>
          <path d="M11.7 7.7 H16 V11.8 H18.8 L13.8 18.8 L8.6 11.8 H11.7Z" fill="#74b62e" stroke="#4f8a1c" stroke-width="0.6"/>
          <rect x="12.8" y="8.6" width="2" height="5" fill="#c9e88f" opacity="0.7"/></svg>
<div class="t" style="left:415.00px;top:359.68px;font-size:13.2px;color:#262626;">103</div>
<div class="t" style="left:502.50px;top:359.68px;font-size:13.2px;color:#262626;">1...</div>
<div class="t" style="left:531.00px;top:359.68px;font-size:13.2px;color:#262626;">Çalışan</div>
<svg class="a" style="left:600.0px;top:363.8px" width="8" height="5"><path d="M0.5 0.5H7.5L4 4.5Z" fill="#6b6b6b"/></svg>
<div class="t" style="left:620.50px;top:359.68px;font-size:13.2px;color:#262626;">103</div>
<div class="t" style="left:839.98px;top:359.68px;font-size:13.2px;color:#262626;">100</div>
<div class="t" style="left:872.00px;top:359.68px;font-size:13.2px;color:#262626;">Santral</div>
<svg class="a" style="left:963.5px;top:363.8px" width="8" height="5"><path d="M0.5 0.5H7.5L4 4.5Z" fill="#6b6b6b"/></svg>
<div class="t" style="left:1087.00px;top:359.68px;font-size:13.2px;color:#262626;">103</div>
<svg class="a" style="left:1122.0px;top:363.8px" width="8" height="5"><path d="M0.5 0.5H7.5L4 4.5Z" fill="#6b6b6b"/></svg>
<div class="t" style="left:1525.30px;top:360.35px;font-size:12.4px;color:#222;letter-spacing:0.148px;">Bir Resim Y...</div>
<div class="a" style="left:1635px;top:357.78px;width:17px;height:17px;background:#fff;border:1.2px solid #a3a3a3"></div>
<svg class="a" style="left:1638px;top:360.78px" width="11" height="10" viewBox="0 0 11 10"><path d="M1 5 L4 8 L10 1.5" fill="none" stroke="#6e6e6e" stroke-width="1.6"/></svg>
<svg class="a" style="left:1724px;top:356.78px" width="20" height="20" viewBox="0 0 20 20">
          <rect x="0" y="0.2" width="15" height="15.3" rx="1.2" fill="#56627f"/><rect x="1" y="1" width="2" height="14" fill="#6e7a98"/>
          <rect x="3.6" y="1.4" width="7.6" height="5.2" fill="#dfe6f2"/><circle cx="8.4" cy="3.9" r="1.3" fill="#2f3a52"/>
          <rect x="3.8" y="9.2" width="6.6" height="6" fill="#f4f6fb"/><rect x="3.8" y="12.8" width="6.6" height="2.4" fill="#5f94d6"/>
          <path d="M11.7 7.7 H16 V11.8 H18.8 L13.8 18.8 L8.6 11.8 H11.7Z" fill="#74b62e" stroke="#4f8a1c" stroke-width="0.6"/>
          <rect x="12.8" y="8.6" width="2" height="5" fill="#c9e88f" opacity="0.7"/></svg>
<div class="t" style="left:415.00px;top:393.53px;font-size:13.2px;color:#262626;">104</div>
<div class="t" style="left:502.50px;top:393.53px;font-size:13.2px;color:#262626;">1...</div>
<div class="t" style="left:531.00px;top:393.53px;font-size:13.2px;color:#262626;">Çalışan</div>
<svg class="a" style="left:600.0px;top:397.6px" width="8" height="5"><path d="M0.5 0.5H7.5L4 4.5Z" fill="#6b6b6b"/></svg>
<div class="t" style="left:620.50px;top:393.53px;font-size:13.2px;color:#262626;">104</div>
<div class="t" style="left:839.98px;top:393.53px;font-size:13.2px;color:#262626;">100</div>
<div class="t" style="left:872.00px;top:393.53px;font-size:13.2px;color:#262626;">Santral</div>
<svg class="a" style="left:963.5px;top:397.6px" width="8" height="5"><path d="M0.5 0.5H7.5L4 4.5Z" fill="#6b6b6b"/></svg>
<div class="t" style="left:1087.00px;top:393.53px;font-size:13.2px;color:#262626;">104</div>
<svg class="a" style="left:1122.0px;top:397.6px" width="8" height="5"><path d="M0.5 0.5H7.5L4 4.5Z" fill="#6b6b6b"/></svg>
<div class="t" style="left:1525.30px;top:394.20px;font-size:12.4px;color:#222;letter-spacing:0.148px;">Bir Resim Y...</div>
<div class="a" style="left:1635px;top:391.62px;width:17px;height:17px;background:#fff;border:1.2px solid #a3a3a3"></div>
<svg class="a" style="left:1638px;top:394.62px" width="11" height="10" viewBox="0 0 11 10"><path d="M1 5 L4 8 L10 1.5" fill="none" stroke="#6e6e6e" stroke-width="1.6"/></svg>
<svg class="a" style="left:1724px;top:390.62px" width="20" height="20" viewBox="0 0 20 20">
          <rect x="0" y="0.2" width="15" height="15.3" rx="1.2" fill="#56627f"/><rect x="1" y="1" width="2" height="14" fill="#6e7a98"/>
          <rect x="3.6" y="1.4" width="7.6" height="5.2" fill="#dfe6f2"/><circle cx="8.4" cy="3.9" r="1.3" fill="#2f3a52"/>
          <rect x="3.8" y="9.2" width="6.6" height="6" fill="#f4f6fb"/><rect x="3.8" y="12.8" width="6.6" height="2.4" fill="#5f94d6"/>
          <path d="M11.7 7.7 H16 V11.8 H18.8 L13.8 18.8 L8.6 11.8 H11.7Z" fill="#74b62e" stroke="#4f8a1c" stroke-width="0.6"/>
          <rect x="12.8" y="8.6" width="2" height="5" fill="#c9e88f" opacity="0.7"/></svg>
<div class="t" style="left:415.00px;top:427.38px;font-size:13.2px;color:#262626;">105</div>
<div class="t" style="left:502.50px;top:427.38px;font-size:13.2px;color:#262626;">1...</div>
<div class="t" style="left:531.00px;top:427.38px;font-size:13.2px;color:#262626;">Çalışan</div>
<svg class="a" style="left:600.0px;top:431.5px" width="8" height="5"><path d="M0.5 0.5H7.5L4 4.5Z" fill="#6b6b6b"/></svg>
<div class="t" style="left:620.50px;top:427.38px;font-size:13.2px;color:#262626;">105</div>
<div class="t" style="left:839.98px;top:427.38px;font-size:13.2px;color:#262626;">100</div>
<div class="t" style="left:872.00px;top:427.38px;font-size:13.2px;color:#262626;">Santral</div>
<svg class="a" style="left:963.5px;top:431.5px" width="8" height="5"><path d="M0.5 0.5H7.5L4 4.5Z" fill="#6b6b6b"/></svg>
<div class="t" style="left:1087.00px;top:427.38px;font-size:13.2px;color:#262626;">105</div>
<svg class="a" style="left:1122.0px;top:431.5px" width="8" height="5"><path d="M0.5 0.5H7.5L4 4.5Z" fill="#6b6b6b"/></svg>
<div class="t" style="left:1525.30px;top:428.05px;font-size:12.4px;color:#222;letter-spacing:0.148px;">Bir Resim Y...</div>
<div class="a" style="left:1635px;top:425.48px;width:17px;height:17px;background:#fff;border:1.2px solid #a3a3a3"></div>
<svg class="a" style="left:1638px;top:428.48px" width="11" height="10" viewBox="0 0 11 10"><path d="M1 5 L4 8 L10 1.5" fill="none" stroke="#6e6e6e" stroke-width="1.6"/></svg>
<svg class="a" style="left:1724px;top:424.48px" width="20" height="20" viewBox="0 0 20 20">
          <rect x="0" y="0.2" width="15" height="15.3" rx="1.2" fill="#56627f"/><rect x="1" y="1" width="2" height="14" fill="#6e7a98"/>
          <rect x="3.6" y="1.4" width="7.6" height="5.2" fill="#dfe6f2"/><circle cx="8.4" cy="3.9" r="1.3" fill="#2f3a52"/>
          <rect x="3.8" y="9.2" width="6.6" height="6" fill="#f4f6fb"/><rect x="3.8" y="12.8" width="6.6" height="2.4" fill="#5f94d6"/>
          <path d="M11.7 7.7 H16 V11.8 H18.8 L13.8 18.8 L8.6 11.8 H11.7Z" fill="#74b62e" stroke="#4f8a1c" stroke-width="0.6"/>
          <rect x="12.8" y="8.6" width="2" height="5" fill="#c9e88f" opacity="0.7"/></svg>
<div class="t" style="left:415.00px;top:461.23px;font-size:13.2px;color:#262626;">106</div>
<div class="t" style="left:502.50px;top:461.23px;font-size:13.2px;color:#262626;">1...</div>
<div class="t" style="left:531.00px;top:461.23px;font-size:13.2px;color:#262626;">Çalışan</div>
<svg class="a" style="left:600.0px;top:465.3px" width="8" height="5"><path d="M0.5 0.5H7.5L4 4.5Z" fill="#6b6b6b"/></svg>
<div class="t" style="left:620.50px;top:461.23px;font-size:13.2px;color:#262626;">106</div>
<div class="t" style="left:839.98px;top:461.23px;font-size:13.2px;color:#262626;">100</div>
<div class="t" style="left:872.00px;top:461.23px;font-size:13.2px;color:#262626;">Santral</div>
<svg class="a" style="left:963.5px;top:465.3px" width="8" height="5"><path d="M0.5 0.5H7.5L4 4.5Z" fill="#6b6b6b"/></svg>
<div class="t" style="left:1087.00px;top:461.23px;font-size:13.2px;color:#262626;">106</div>
<svg class="a" style="left:1122.0px;top:465.3px" width="8" height="5"><path d="M0.5 0.5H7.5L4 4.5Z" fill="#6b6b6b"/></svg>
<div class="t" style="left:1525.30px;top:461.90px;font-size:12.4px;color:#222;letter-spacing:0.148px;">Bir Resim Y...</div>
<div class="a" style="left:1635px;top:459.33px;width:17px;height:17px;background:#fff;border:1.2px solid #a3a3a3"></div>
<svg class="a" style="left:1638px;top:462.33px" width="11" height="10" viewBox="0 0 11 10"><path d="M1 5 L4 8 L10 1.5" fill="none" stroke="#6e6e6e" stroke-width="1.6"/></svg>
<svg class="a" style="left:1724px;top:458.33px" width="20" height="20" viewBox="0 0 20 20">
          <rect x="0" y="0.2" width="15" height="15.3" rx="1.2" fill="#56627f"/><rect x="1" y="1" width="2" height="14" fill="#6e7a98"/>
          <rect x="3.6" y="1.4" width="7.6" height="5.2" fill="#dfe6f2"/><circle cx="8.4" cy="3.9" r="1.3" fill="#2f3a52"/>
          <rect x="3.8" y="9.2" width="6.6" height="6" fill="#f4f6fb"/><rect x="3.8" y="12.8" width="6.6" height="2.4" fill="#5f94d6"/>
          <path d="M11.7 7.7 H16 V11.8 H18.8 L13.8 18.8 L8.6 11.8 H11.7Z" fill="#74b62e" stroke="#4f8a1c" stroke-width="0.6"/>
          <rect x="12.8" y="8.6" width="2" height="5" fill="#c9e88f" opacity="0.7"/></svg>
<div class="t" style="left:415.00px;top:495.08px;font-size:13.2px;color:#262626;">107</div>
<div class="t" style="left:502.50px;top:495.08px;font-size:13.2px;color:#262626;">1...</div>
<div class="t" style="left:531.00px;top:495.08px;font-size:13.2px;color:#262626;">Alt Yön...</div>
<svg class="a" style="left:600.0px;top:499.2px" width="8" height="5"><path d="M0.5 0.5H7.5L4 4.5Z" fill="#6b6b6b"/></svg>
<div class="t" style="left:620.50px;top:495.08px;font-size:13.2px;color:#262626;">107</div>
<div class="t" style="left:839.98px;top:495.08px;font-size:13.2px;color:#262626;">100</div>
<div class="t" style="left:872.00px;top:495.08px;font-size:13.2px;color:#262626;">Santral</div>
<svg class="a" style="left:963.5px;top:499.2px" width="8" height="5"><path d="M0.5 0.5H7.5L4 4.5Z" fill="#6b6b6b"/></svg>
<div class="t" style="left:1087.00px;top:495.08px;font-size:13.2px;color:#262626;">107</div>
<svg class="a" style="left:1122.0px;top:499.2px" width="8" height="5"><path d="M0.5 0.5H7.5L4 4.5Z" fill="#6b6b6b"/></svg>
<div class="t" style="left:1525.30px;top:495.75px;font-size:12.4px;color:#222;letter-spacing:0.148px;">Bir Resim Y...</div>
<div class="a" style="left:1635px;top:493.18px;width:17px;height:17px;background:#fff;border:1.2px solid #a3a3a3"></div>
<svg class="a" style="left:1638px;top:496.18px" width="11" height="10" viewBox="0 0 11 10"><path d="M1 5 L4 8 L10 1.5" fill="none" stroke="#6e6e6e" stroke-width="1.6"/></svg>
<svg class="a" style="left:1724px;top:492.18px" width="20" height="20" viewBox="0 0 20 20">
          <rect x="0" y="0.2" width="15" height="15.3" rx="1.2" fill="#56627f"/><rect x="1" y="1" width="2" height="14" fill="#6e7a98"/>
          <rect x="3.6" y="1.4" width="7.6" height="5.2" fill="#dfe6f2"/><circle cx="8.4" cy="3.9" r="1.3" fill="#2f3a52"/>
          <rect x="3.8" y="9.2" width="6.6" height="6" fill="#f4f6fb"/><rect x="3.8" y="12.8" width="6.6" height="2.4" fill="#5f94d6"/>
          <path d="M11.7 7.7 H16 V11.8 H18.8 L13.8 18.8 L8.6 11.8 H11.7Z" fill="#74b62e" stroke="#4f8a1c" stroke-width="0.6"/>
          <rect x="12.8" y="8.6" width="2" height="5" fill="#c9e88f" opacity="0.7"/></svg>
<div class="t" style="left:415.00px;top:528.93px;font-size:13.2px;color:#262626;">108</div>
<div class="t" style="left:502.50px;top:528.93px;font-size:13.2px;color:#262626;">1...</div>
<div class="t" style="left:531.00px;top:528.93px;font-size:13.2px;color:#262626;">Üst Yön...</div>
<svg class="a" style="left:600.0px;top:533.0px" width="8" height="5"><path d="M0.5 0.5H7.5L4 4.5Z" fill="#6b6b6b"/></svg>
<div class="t" style="left:620.50px;top:528.93px;font-size:13.2px;color:#262626;">108</div>
<div class="t" style="left:839.98px;top:528.93px;font-size:13.2px;color:#262626;">100</div>
<div class="t" style="left:872.00px;top:528.93px;font-size:13.2px;color:#262626;">Santral</div>
<svg class="a" style="left:963.5px;top:533.0px" width="8" height="5"><path d="M0.5 0.5H7.5L4 4.5Z" fill="#6b6b6b"/></svg>
<div class="t" style="left:1087.00px;top:528.93px;font-size:13.2px;color:#262626;">108</div>
<svg class="a" style="left:1122.0px;top:533.0px" width="8" height="5"><path d="M0.5 0.5H7.5L4 4.5Z" fill="#6b6b6b"/></svg>
<div class="t" style="left:1525.30px;top:529.60px;font-size:12.4px;color:#222;letter-spacing:0.148px;">Bir Resim Y...</div>
<div class="a" style="left:1635px;top:527.02px;width:17px;height:17px;background:#fff;border:1.2px solid #a3a3a3"></div>
<svg class="a" style="left:1638px;top:530.02px" width="11" height="10" viewBox="0 0 11 10"><path d="M1 5 L4 8 L10 1.5" fill="none" stroke="#6e6e6e" stroke-width="1.6"/></svg>
<svg class="a" style="left:1724px;top:526.02px" width="20" height="20" viewBox="0 0 20 20">
          <rect x="0" y="0.2" width="15" height="15.3" rx="1.2" fill="#56627f"/><rect x="1" y="1" width="2" height="14" fill="#6e7a98"/>
          <rect x="3.6" y="1.4" width="7.6" height="5.2" fill="#dfe6f2"/><circle cx="8.4" cy="3.9" r="1.3" fill="#2f3a52"/>
          <rect x="3.8" y="9.2" width="6.6" height="6" fill="#f4f6fb"/><rect x="3.8" y="12.8" width="6.6" height="2.4" fill="#5f94d6"/>
          <path d="M11.7 7.7 H16 V11.8 H18.8 L13.8 18.8 L8.6 11.8 H11.7Z" fill="#74b62e" stroke="#4f8a1c" stroke-width="0.6"/>
          <rect x="12.8" y="8.6" width="2" height="5" fill="#c9e88f" opacity="0.7"/></svg>
<div class="t" style="left:415.00px;top:562.78px;font-size:13.2px;color:#262626;">109</div>
<div class="t" style="left:502.50px;top:562.78px;font-size:13.2px;color:#262626;">1...</div>
<div class="t" style="left:531.00px;top:562.78px;font-size:13.2px;color:#262626;">Çalışan</div>
<svg class="a" style="left:600.0px;top:566.9px" width="8" height="5"><path d="M0.5 0.5H7.5L4 4.5Z" fill="#6b6b6b"/></svg>
<div class="t" style="left:872.00px;top:562.78px;font-size:13.2px;color:#262626;">Santral</div>
<svg class="a" style="left:963.5px;top:566.9px" width="8" height="5"><path d="M0.5 0.5H7.5L4 4.5Z" fill="#6b6b6b"/></svg>
<div class="t" style="left:1087.00px;top:562.78px;font-size:13.2px;color:#262626;">109</div>
<svg class="a" style="left:1122.0px;top:566.9px" width="8" height="5"><path d="M0.5 0.5H7.5L4 4.5Z" fill="#6b6b6b"/></svg>
<div class="t" style="left:1525.30px;top:563.45px;font-size:12.4px;color:#222;letter-spacing:0.148px;">Bir Resim Y...</div>
<div class="a" style="left:1635px;top:560.88px;width:17px;height:17px;background:#fff;border:1.2px solid #a3a3a3"></div>
<svg class="a" style="left:1724px;top:559.88px" width="20" height="20" viewBox="0 0 20 20">
          <rect x="0" y="0.2" width="15" height="15.3" rx="1.2" fill="#56627f"/><rect x="1" y="1" width="2" height="14" fill="#6e7a98"/>
          <rect x="3.6" y="1.4" width="7.6" height="5.2" fill="#dfe6f2"/><circle cx="8.4" cy="3.9" r="1.3" fill="#2f3a52"/>
          <rect x="3.8" y="9.2" width="6.6" height="6" fill="#f4f6fb"/><rect x="3.8" y="12.8" width="6.6" height="2.4" fill="#5f94d6"/>
          <path d="M11.7 7.7 H16 V11.8 H18.8 L13.8 18.8 L8.6 11.8 H11.7Z" fill="#74b62e" stroke="#4f8a1c" stroke-width="0.6"/>
          <rect x="12.8" y="8.6" width="2" height="5" fill="#c9e88f" opacity="0.7"/></svg>
<div class="t" style="left:415.00px;top:596.63px;font-size:13.2px;color:#262626;">110</div>
<div class="t" style="left:502.50px;top:596.63px;font-size:13.2px;color:#262626;">1...</div>
<div class="t" style="left:531.00px;top:596.63px;font-size:13.2px;color:#262626;">Çalışan</div>
<svg class="a" style="left:600.0px;top:600.7px" width="8" height="5"><path d="M0.5 0.5H7.5L4 4.5Z" fill="#6b6b6b"/></svg>
<div class="t" style="left:872.00px;top:596.63px;font-size:13.2px;color:#262626;">Santral</div>
<svg class="a" style="left:963.5px;top:600.7px" width="8" height="5"><path d="M0.5 0.5H7.5L4 4.5Z" fill="#6b6b6b"/></svg>
<div class="t" style="left:1087.00px;top:596.63px;font-size:13.2px;color:#262626;">110</div>
<svg class="a" style="left:1122.0px;top:600.7px" width="8" height="5"><path d="M0.5 0.5H7.5L4 4.5Z" fill="#6b6b6b"/></svg>
<div class="t" style="left:1525.30px;top:597.30px;font-size:12.4px;color:#222;letter-spacing:0.148px;">Bir Resim Y...</div>
<div class="a" style="left:1635px;top:594.72px;width:17px;height:17px;background:#fff;border:1.2px solid #a3a3a3"></div>
<svg class="a" style="left:1724px;top:593.72px" width="20" height="20" viewBox="0 0 20 20">
          <rect x="0" y="0.2" width="15" height="15.3" rx="1.2" fill="#56627f"/><rect x="1" y="1" width="2" height="14" fill="#6e7a98"/>
          <rect x="3.6" y="1.4" width="7.6" height="5.2" fill="#dfe6f2"/><circle cx="8.4" cy="3.9" r="1.3" fill="#2f3a52"/>
          <rect x="3.8" y="9.2" width="6.6" height="6" fill="#f4f6fb"/><rect x="3.8" y="12.8" width="6.6" height="2.4" fill="#5f94d6"/>
          <path d="M11.7 7.7 H16 V11.8 H18.8 L13.8 18.8 L8.6 11.8 H11.7Z" fill="#74b62e" stroke="#4f8a1c" stroke-width="0.6"/>
          <rect x="12.8" y="8.6" width="2" height="5" fill="#c9e88f" opacity="0.7"/></svg>
<div class="t" style="left:415.00px;top:630.48px;font-size:13.2px;color:#262626;">111</div>
<div class="t" style="left:502.50px;top:630.48px;font-size:13.2px;color:#262626;">1...</div>
<div class="t" style="left:531.00px;top:630.48px;font-size:13.2px;color:#262626;">Çalışan</div>
<svg class="a" style="left:600.0px;top:634.6px" width="8" height="5"><path d="M0.5 0.5H7.5L4 4.5Z" fill="#6b6b6b"/></svg>
<div class="t" style="left:872.00px;top:630.48px;font-size:13.2px;color:#262626;">Santral</div>
<svg class="a" style="left:963.5px;top:634.6px" width="8" height="5"><path d="M0.5 0.5H7.5L4 4.5Z" fill="#6b6b6b"/></svg>
<div class="t" style="left:1087.00px;top:630.48px;font-size:13.2px;color:#262626;">111</div>
<svg class="a" style="left:1122.0px;top:634.6px" width="8" height="5"><path d="M0.5 0.5H7.5L4 4.5Z" fill="#6b6b6b"/></svg>
<div class="t" style="left:1525.30px;top:631.15px;font-size:12.4px;color:#222;letter-spacing:0.148px;">Bir Resim Y...</div>
<div class="a" style="left:1635px;top:628.57px;width:17px;height:17px;background:#fff;border:1.2px solid #a3a3a3"></div>
<svg class="a" style="left:1724px;top:627.57px" width="20" height="20" viewBox="0 0 20 20">
          <rect x="0" y="0.2" width="15" height="15.3" rx="1.2" fill="#56627f"/><rect x="1" y="1" width="2" height="14" fill="#6e7a98"/>
          <rect x="3.6" y="1.4" width="7.6" height="5.2" fill="#dfe6f2"/><circle cx="8.4" cy="3.9" r="1.3" fill="#2f3a52"/>
          <rect x="3.8" y="9.2" width="6.6" height="6" fill="#f4f6fb"/><rect x="3.8" y="12.8" width="6.6" height="2.4" fill="#5f94d6"/>
          <path d="M11.7 7.7 H16 V11.8 H18.8 L13.8 18.8 L8.6 11.8 H11.7Z" fill="#74b62e" stroke="#4f8a1c" stroke-width="0.6"/>
          <rect x="12.8" y="8.6" width="2" height="5" fill="#c9e88f" opacity="0.7"/></svg>
<div class="t" style="left:415.00px;top:664.33px;font-size:13.2px;color:#262626;">112</div>
<div class="t" style="left:502.50px;top:664.33px;font-size:13.2px;color:#262626;">1...</div>
<div class="t" style="left:531.00px;top:664.33px;font-size:13.2px;color:#262626;">Çalışan</div>
<svg class="a" style="left:600.0px;top:668.4px" width="8" height="5"><path d="M0.5 0.5H7.5L4 4.5Z" fill="#6b6b6b"/></svg>
<div class="t" style="left:872.00px;top:664.33px;font-size:13.2px;color:#262626;">Santral</div>
<svg class="a" style="left:963.5px;top:668.4px" width="8" height="5"><path d="M0.5 0.5H7.5L4 4.5Z" fill="#6b6b6b"/></svg>
<div class="t" style="left:1087.00px;top:664.33px;font-size:13.2px;color:#262626;">112</div>
<svg class="a" style="left:1122.0px;top:668.4px" width="8" height="5"><path d="M0.5 0.5H7.5L4 4.5Z" fill="#6b6b6b"/></svg>
<div class="t" style="left:1525.30px;top:665.00px;font-size:12.4px;color:#222;letter-spacing:0.148px;">Bir Resim Y...</div>
<div class="a" style="left:1635px;top:662.42px;width:17px;height:17px;background:#fff;border:1.2px solid #a3a3a3"></div>
<svg class="a" style="left:1724px;top:661.42px" width="20" height="20" viewBox="0 0 20 20">
          <rect x="0" y="0.2" width="15" height="15.3" rx="1.2" fill="#56627f"/><rect x="1" y="1" width="2" height="14" fill="#6e7a98"/>
          <rect x="3.6" y="1.4" width="7.6" height="5.2" fill="#dfe6f2"/><circle cx="8.4" cy="3.9" r="1.3" fill="#2f3a52"/>
          <rect x="3.8" y="9.2" width="6.6" height="6" fill="#f4f6fb"/><rect x="3.8" y="12.8" width="6.6" height="2.4" fill="#5f94d6"/>
          <path d="M11.7 7.7 H16 V11.8 H18.8 L13.8 18.8 L8.6 11.8 H11.7Z" fill="#74b62e" stroke="#4f8a1c" stroke-width="0.6"/>
          <rect x="12.8" y="8.6" width="2" height="5" fill="#c9e88f" opacity="0.7"/></svg>
<div class="t" style="left:415.00px;top:698.18px;font-size:13.2px;color:#262626;">113</div>
<div class="t" style="left:502.50px;top:698.18px;font-size:13.2px;color:#262626;">1...</div>
<div class="t" style="left:531.00px;top:698.18px;font-size:13.2px;color:#262626;">Çalışan</div>
<svg class="a" style="left:600.0px;top:702.3px" width="8" height="5"><path d="M0.5 0.5H7.5L4 4.5Z" fill="#6b6b6b"/></svg>
<div class="t" style="left:872.00px;top:698.18px;font-size:13.2px;color:#262626;">Santral</div>
<svg class="a" style="left:963.5px;top:702.3px" width="8" height="5"><path d="M0.5 0.5H7.5L4 4.5Z" fill="#6b6b6b"/></svg>
<div class="t" style="left:1087.00px;top:698.18px;font-size:13.2px;color:#262626;">113</div>
<svg class="a" style="left:1122.0px;top:702.3px" width="8" height="5"><path d="M0.5 0.5H7.5L4 4.5Z" fill="#6b6b6b"/></svg>
<div class="t" style="left:1525.30px;top:698.85px;font-size:12.4px;color:#222;letter-spacing:0.148px;">Bir Resim Y...</div>
<div class="a" style="left:1635px;top:696.27px;width:17px;height:17px;background:#fff;border:1.2px solid #a3a3a3"></div>
<svg class="a" style="left:1724px;top:695.27px" width="20" height="20" viewBox="0 0 20 20">
          <rect x="0" y="0.2" width="15" height="15.3" rx="1.2" fill="#56627f"/><rect x="1" y="1" width="2" height="14" fill="#6e7a98"/>
          <rect x="3.6" y="1.4" width="7.6" height="5.2" fill="#dfe6f2"/><circle cx="8.4" cy="3.9" r="1.3" fill="#2f3a52"/>
          <rect x="3.8" y="9.2" width="6.6" height="6" fill="#f4f6fb"/><rect x="3.8" y="12.8" width="6.6" height="2.4" fill="#5f94d6"/>
          <path d="M11.7 7.7 H16 V11.8 H18.8 L13.8 18.8 L8.6 11.8 H11.7Z" fill="#74b62e" stroke="#4f8a1c" stroke-width="0.6"/>
          <rect x="12.8" y="8.6" width="2" height="5" fill="#c9e88f" opacity="0.7"/></svg>
<div class="t" style="left:415.00px;top:732.03px;font-size:13.2px;color:#262626;">114</div>
<div class="t" style="left:502.50px;top:732.03px;font-size:13.2px;color:#262626;">1...</div>
<div class="t" style="left:531.00px;top:732.03px;font-size:13.2px;color:#262626;">Çalışan</div>
<svg class="a" style="left:600.0px;top:736.1px" width="8" height="5"><path d="M0.5 0.5H7.5L4 4.5Z" fill="#6b6b6b"/></svg>
<div class="t" style="left:872.00px;top:732.03px;font-size:13.2px;color:#262626;">Santral</div>
<svg class="a" style="left:963.5px;top:736.1px" width="8" height="5"><path d="M0.5 0.5H7.5L4 4.5Z" fill="#6b6b6b"/></svg>
<div class="t" style="left:1087.00px;top:732.03px;font-size:13.2px;color:#262626;">114</div>
<svg class="a" style="left:1122.0px;top:736.1px" width="8" height="5"><path d="M0.5 0.5H7.5L4 4.5Z" fill="#6b6b6b"/></svg>
<div class="t" style="left:1525.30px;top:732.70px;font-size:12.4px;color:#222;letter-spacing:0.148px;">Bir Resim Y...</div>
<div class="a" style="left:1635px;top:730.12px;width:17px;height:17px;background:#fff;border:1.2px solid #a3a3a3"></div>
<svg class="a" style="left:1724px;top:729.12px" width="20" height="20" viewBox="0 0 20 20">
          <rect x="0" y="0.2" width="15" height="15.3" rx="1.2" fill="#56627f"/><rect x="1" y="1" width="2" height="14" fill="#6e7a98"/>
          <rect x="3.6" y="1.4" width="7.6" height="5.2" fill="#dfe6f2"/><circle cx="8.4" cy="3.9" r="1.3" fill="#2f3a52"/>
          <rect x="3.8" y="9.2" width="6.6" height="6" fill="#f4f6fb"/><rect x="3.8" y="12.8" width="6.6" height="2.4" fill="#5f94d6"/>
          <path d="M11.7 7.7 H16 V11.8 H18.8 L13.8 18.8 L8.6 11.8 H11.7Z" fill="#74b62e" stroke="#4f8a1c" stroke-width="0.6"/>
          <rect x="12.8" y="8.6" width="2" height="5" fill="#c9e88f" opacity="0.7"/></svg>
<div class="t" style="left:415.00px;top:765.88px;font-size:13.2px;color:#262626;">115</div>
<div class="t" style="left:502.50px;top:765.88px;font-size:13.2px;color:#262626;">1...</div>
<div class="t" style="left:531.00px;top:765.88px;font-size:13.2px;color:#262626;">Çalışan</div>
<svg class="a" style="left:600.0px;top:770.0px" width="8" height="5"><path d="M0.5 0.5H7.5L4 4.5Z" fill="#6b6b6b"/></svg>
<div class="t" style="left:872.00px;top:765.88px;font-size:13.2px;color:#262626;">Santral</div>
<svg class="a" style="left:963.5px;top:770.0px" width="8" height="5"><path d="M0.5 0.5H7.5L4 4.5Z" fill="#6b6b6b"/></svg>
<div class="t" style="left:1087.00px;top:765.88px;font-size:13.2px;color:#262626;">115</div>
<svg class="a" style="left:1122.0px;top:770.0px" width="8" height="5"><path d="M0.5 0.5H7.5L4 4.5Z" fill="#6b6b6b"/></svg>
<div class="t" style="left:1525.30px;top:766.55px;font-size:12.4px;color:#222;letter-spacing:0.148px;">Bir Resim Y...</div>
<div class="a" style="left:1635px;top:763.97px;width:17px;height:17px;background:#fff;border:1.2px solid #a3a3a3"></div>
<svg class="a" style="left:1724px;top:762.97px" width="20" height="20" viewBox="0 0 20 20">
          <rect x="0" y="0.2" width="15" height="15.3" rx="1.2" fill="#56627f"/><rect x="1" y="1" width="2" height="14" fill="#6e7a98"/>
          <rect x="3.6" y="1.4" width="7.6" height="5.2" fill="#dfe6f2"/><circle cx="8.4" cy="3.9" r="1.3" fill="#2f3a52"/>
          <rect x="3.8" y="9.2" width="6.6" height="6" fill="#f4f6fb"/><rect x="3.8" y="12.8" width="6.6" height="2.4" fill="#5f94d6"/>
          <path d="M11.7 7.7 H16 V11.8 H18.8 L13.8 18.8 L8.6 11.8 H11.7Z" fill="#74b62e" stroke="#4f8a1c" stroke-width="0.6"/>
          <rect x="12.8" y="8.6" width="2" height="5" fill="#c9e88f" opacity="0.7"/></svg>
<div class="t" style="left:415.00px;top:799.73px;font-size:13.2px;color:#262626;">116</div>
<div class="t" style="left:502.50px;top:799.73px;font-size:13.2px;color:#262626;">1...</div>
<div class="t" style="left:531.00px;top:799.73px;font-size:13.2px;color:#262626;">Çalışan</div>
<svg class="a" style="left:600.0px;top:803.8px" width="8" height="5"><path d="M0.5 0.5H7.5L4 4.5Z" fill="#6b6b6b"/></svg>
<div class="t" style="left:872.00px;top:799.73px;font-size:13.2px;color:#262626;">Santral</div>
<svg class="a" style="left:963.5px;top:803.8px" width="8" height="5"><path d="M0.5 0.5H7.5L4 4.5Z" fill="#6b6b6b"/></svg>
<div class="t" style="left:1087.00px;top:799.73px;font-size:13.2px;color:#262626;">116</div>
<svg class="a" style="left:1122.0px;top:803.8px" width="8" height="5"><path d="M0.5 0.5H7.5L4 4.5Z" fill="#6b6b6b"/></svg>
<div class="t" style="left:1525.30px;top:800.40px;font-size:12.4px;color:#222;letter-spacing:0.148px;">Bir Resim Y...</div>
<div class="a" style="left:1635px;top:797.82px;width:17px;height:17px;background:#fff;border:1.2px solid #a3a3a3"></div>
<svg class="a" style="left:1724px;top:796.82px" width="20" height="20" viewBox="0 0 20 20">
          <rect x="0" y="0.2" width="15" height="15.3" rx="1.2" fill="#56627f"/><rect x="1" y="1" width="2" height="14" fill="#6e7a98"/>
          <rect x="3.6" y="1.4" width="7.6" height="5.2" fill="#dfe6f2"/><circle cx="8.4" cy="3.9" r="1.3" fill="#2f3a52"/>
          <rect x="3.8" y="9.2" width="6.6" height="6" fill="#f4f6fb"/><rect x="3.8" y="12.8" width="6.6" height="2.4" fill="#5f94d6"/>
          <path d="M11.7 7.7 H16 V11.8 H18.8 L13.8 18.8 L8.6 11.8 H11.7Z" fill="#74b62e" stroke="#4f8a1c" stroke-width="0.6"/>
          <rect x="12.8" y="8.6" width="2" height="5" fill="#c9e88f" opacity="0.7"/></svg>
<div class="t" style="left:415.00px;top:833.58px;font-size:13.2px;color:#262626;">117</div>
<div class="t" style="left:502.50px;top:833.58px;font-size:13.2px;color:#262626;">1...</div>
<div class="t" style="left:531.00px;top:833.58px;font-size:13.2px;color:#262626;">Çalışan</div>
<svg class="a" style="left:600.0px;top:837.7px" width="8" height="5"><path d="M0.5 0.5H7.5L4 4.5Z" fill="#6b6b6b"/></svg>
<div class="t" style="left:872.00px;top:833.58px;font-size:13.2px;color:#262626;">Santral</div>
<svg class="a" style="left:963.5px;top:837.7px" width="8" height="5"><path d="M0.5 0.5H7.5L4 4.5Z" fill="#6b6b6b"/></svg>
<div class="t" style="left:1087.00px;top:833.58px;font-size:13.2px;color:#262626;">117</div>
<svg class="a" style="left:1122.0px;top:837.7px" width="8" height="5"><path d="M0.5 0.5H7.5L4 4.5Z" fill="#6b6b6b"/></svg>
<div class="t" style="left:1525.30px;top:834.25px;font-size:12.4px;color:#222;letter-spacing:0.148px;">Bir Resim Y...</div>
<div class="a" style="left:1635px;top:831.67px;width:17px;height:17px;background:#fff;border:1.2px solid #a3a3a3"></div>
<svg class="a" style="left:1724px;top:830.67px" width="20" height="20" viewBox="0 0 20 20">
          <rect x="0" y="0.2" width="15" height="15.3" rx="1.2" fill="#56627f"/><rect x="1" y="1" width="2" height="14" fill="#6e7a98"/>
          <rect x="3.6" y="1.4" width="7.6" height="5.2" fill="#dfe6f2"/><circle cx="8.4" cy="3.9" r="1.3" fill="#2f3a52"/>
          <rect x="3.8" y="9.2" width="6.6" height="6" fill="#f4f6fb"/><rect x="3.8" y="12.8" width="6.6" height="2.4" fill="#5f94d6"/>
          <path d="M11.7 7.7 H16 V11.8 H18.8 L13.8 18.8 L8.6 11.8 H11.7Z" fill="#74b62e" stroke="#4f8a1c" stroke-width="0.6"/>
          <rect x="12.8" y="8.6" width="2" height="5" fill="#c9e88f" opacity="0.7"/></svg>
<div class="t" style="left:415.00px;top:867.43px;font-size:13.2px;color:#262626;">118</div>
<div class="t" style="left:502.50px;top:867.43px;font-size:13.2px;color:#262626;">1...</div>
<div class="t" style="left:531.00px;top:867.43px;font-size:13.2px;color:#262626;">Çalışan</div>
<svg class="a" style="left:600.0px;top:871.5px" width="8" height="5"><path d="M0.5 0.5H7.5L4 4.5Z" fill="#6b6b6b"/></svg>
<div class="t" style="left:872.00px;top:867.43px;font-size:13.2px;color:#262626;">Santral</div>
<svg class="a" style="left:963.5px;top:871.5px" width="8" height="5"><path d="M0.5 0.5H7.5L4 4.5Z" fill="#6b6b6b"/></svg>
<div class="t" style="left:1087.00px;top:867.43px;font-size:13.2px;color:#262626;">118</div>
<svg class="a" style="left:1122.0px;top:871.5px" width="8" height="5"><path d="M0.5 0.5H7.5L4 4.5Z" fill="#6b6b6b"/></svg>
<div class="t" style="left:1525.30px;top:868.10px;font-size:12.4px;color:#222;letter-spacing:0.148px;">Bir Resim Y...</div>
<div class="a" style="left:1635px;top:865.52px;width:17px;height:17px;background:#fff;border:1.2px solid #a3a3a3"></div>
<svg class="a" style="left:1724px;top:864.52px" width="20" height="20" viewBox="0 0 20 20">
          <rect x="0" y="0.2" width="15" height="15.3" rx="1.2" fill="#56627f"/><rect x="1" y="1" width="2" height="14" fill="#6e7a98"/>
          <rect x="3.6" y="1.4" width="7.6" height="5.2" fill="#dfe6f2"/><circle cx="8.4" cy="3.9" r="1.3" fill="#2f3a52"/>
          <rect x="3.8" y="9.2" width="6.6" height="6" fill="#f4f6fb"/><rect x="3.8" y="12.8" width="6.6" height="2.4" fill="#5f94d6"/>
          <path d="M11.7 7.7 H16 V11.8 H18.8 L13.8 18.8 L8.6 11.8 H11.7Z" fill="#74b62e" stroke="#4f8a1c" stroke-width="0.6"/>
          <rect x="12.8" y="8.6" width="2" height="5" fill="#c9e88f" opacity="0.7"/></svg>
<div class="t" style="left:415.00px;top:901.28px;font-size:13.2px;color:#262626;">119</div>
<div class="t" style="left:502.50px;top:901.28px;font-size:13.2px;color:#262626;">1...</div>
<div class="t" style="left:531.00px;top:901.28px;font-size:13.2px;color:#262626;">Çalışan</div>
<svg class="a" style="left:600.0px;top:905.4px" width="8" height="5"><path d="M0.5 0.5H7.5L4 4.5Z" fill="#6b6b6b"/></svg>
<div class="t" style="left:872.00px;top:901.28px;font-size:13.2px;color:#262626;">Santral</div>
<svg class="a" style="left:963.5px;top:905.4px" width="8" height="5"><path d="M0.5 0.5H7.5L4 4.5Z" fill="#6b6b6b"/></svg>
<div class="t" style="left:1087.00px;top:901.28px;font-size:13.2px;color:#262626;">119</div>
<svg class="a" style="left:1122.0px;top:905.4px" width="8" height="5"><path d="M0.5 0.5H7.5L4 4.5Z" fill="#6b6b6b"/></svg>
<div class="t" style="left:1525.30px;top:901.95px;font-size:12.4px;color:#222;letter-spacing:0.148px;">Bir Resim Y...</div>
<div class="a" style="left:1635px;top:899.37px;width:17px;height:17px;background:#fff;border:1.2px solid #a3a3a3"></div>
<svg class="a" style="left:1724px;top:898.37px" width="20" height="20" viewBox="0 0 20 20">
          <rect x="0" y="0.2" width="15" height="15.3" rx="1.2" fill="#56627f"/><rect x="1" y="1" width="2" height="14" fill="#6e7a98"/>
          <rect x="3.6" y="1.4" width="7.6" height="5.2" fill="#dfe6f2"/><circle cx="8.4" cy="3.9" r="1.3" fill="#2f3a52"/>
          <rect x="3.8" y="9.2" width="6.6" height="6" fill="#f4f6fb"/><rect x="3.8" y="12.8" width="6.6" height="2.4" fill="#5f94d6"/>
          <path d="M11.7 7.7 H16 V11.8 H18.8 L13.8 18.8 L8.6 11.8 H11.7Z" fill="#74b62e" stroke="#4f8a1c" stroke-width="0.6"/>
          <rect x="12.8" y="8.6" width="2" height="5" fill="#c9e88f" opacity="0.7"/></svg>
<div class="t" style="left:415.00px;top:935.13px;font-size:13.2px;color:#262626;">120</div>
<div class="t" style="left:502.50px;top:935.13px;font-size:13.2px;color:#262626;">1...</div>
<div class="t" style="left:531.00px;top:935.13px;font-size:13.2px;color:#262626;">Çalışan</div>
<svg class="a" style="left:600.0px;top:939.2px" width="8" height="5"><path d="M0.5 0.5H7.5L4 4.5Z" fill="#6b6b6b"/></svg>
<div class="t" style="left:872.00px;top:935.13px;font-size:13.2px;color:#262626;">Santral</div>
<svg class="a" style="left:963.5px;top:939.2px" width="8" height="5"><path d="M0.5 0.5H7.5L4 4.5Z" fill="#6b6b6b"/></svg>
<div class="t" style="left:1087.00px;top:935.13px;font-size:13.2px;color:#262626;">120</div>
<svg class="a" style="left:1122.0px;top:939.2px" width="8" height="5"><path d="M0.5 0.5H7.5L4 4.5Z" fill="#6b6b6b"/></svg>
<div class="t" style="left:1525.30px;top:935.80px;font-size:12.4px;color:#222;letter-spacing:0.148px;">Bir Resim Y...</div>
<div class="a" style="left:1635px;top:933.22px;width:17px;height:17px;background:#fff;border:1.2px solid #a3a3a3"></div>
<svg class="a" style="left:1724px;top:932.22px" width="20" height="20" viewBox="0 0 20 20">
          <rect x="0" y="0.2" width="15" height="15.3" rx="1.2" fill="#56627f"/><rect x="1" y="1" width="2" height="14" fill="#6e7a98"/>
          <rect x="3.6" y="1.4" width="7.6" height="5.2" fill="#dfe6f2"/><circle cx="8.4" cy="3.9" r="1.3" fill="#2f3a52"/>
          <rect x="3.8" y="9.2" width="6.6" height="6" fill="#f4f6fb"/><rect x="3.8" y="12.8" width="6.6" height="2.4" fill="#5f94d6"/>
          <path d="M11.7 7.7 H16 V11.8 H18.8 L13.8 18.8 L8.6 11.8 H11.7Z" fill="#74b62e" stroke="#4f8a1c" stroke-width="0.6"/>
          <rect x="12.8" y="8.6" width="2" height="5" fill="#c9e88f" opacity="0.7"/></svg>
<div class="a" style="left:380px;top:953.5px;width:1430px;height:1.5px;background:#b4b4b4"></div><div class="a" style="left:147px;top:956.3px;width:1666px;height:1.7px;background:#a4a4a4"></div>
<div class="a" style="left:1788px;top:248px;width:21px;height:709px;background:#efefef"></div>
<div class="a" style="left:1789.3px;top:249.6px;width:18px;height:19px;background:#fff;border:1.3px solid #a4a4a4"></div>
<svg class="a" style="left:1794px;top:255px" width="9" height="6"><path d="M0.5 5H8.5L4.5 0.5Z" fill="#6e6e6e"/></svg>
<div class="a" style="left:1789.3px;top:269.7px;width:18px;height:313.5px;background:#fff;border:1.3px solid #a4a4a4"></div>
<div class="a" style="left:1811.8px;top:97.5px;width:2px;height:860.5px;background:#9d9d9d"></div>
<div class="a" style="left:1809.3px;top:138.5px;width:1px;height:819px;background:#cfcfcf"></div>
<div class="a" style="left:133px;top:34px;width:177.5px;height:46px;border:4.7px solid #fe1a1a;border-radius:23px"></div>
<div class="a" style="left:0px;top:77.7px;width:107px;height:127.3px;border:5px solid #fe1a1a;border-radius:30px"></div>
<div class="a" style="left:147px;top:100px;width:232.5px;height:152px;border:7px solid #fe1a1a;border-radius:35px"></div>
<svg class="a" style="left:0;top:0" width="1900" height="1000" viewBox="0 0 1900 1000"><path d="M1284.0 745.4 L1843.8 721.1 A52 52 0 0 1 1897.3 781.7 L1871.3 936.6 A52 52 0 0 1 1820.0 980.0 L1306.8 980.0 A44 44 0 0 1 1263.7 944.9 L1235.4 807.8 A52 52 0 0 1 1284.0 745.4 Z" fill="#064aae"/><path d="M1288.1 753.8 L1839.6 729.8 A44 44 0 0 1 1884.8 781.6 L1855.5 943.8 A44 44 0 0 1 1812.2 980.0 L1313.9 980.0 A40 40 0 0 1 1274.7 947.7 L1246.9 806.2 A44 44 0 0 1 1288.1 753.8 Z" fill="#f47f35"/></svg>
<div class="t" style="left:1290.50px;top:802.53px;font-size:23px;color:#ffffff;transform-origin:0 0;transform:scaleX(1.1918);-webkit-text-stroke:0.75px #ffffff;">Admin paneli kısmından kullanıcı işlemlerinizi</div>
<div class="t" style="left:1346.15px;top:834.53px;font-size:23px;color:#ffffff;transform-origin:0 0;transform:scaleX(1.2125);-webkit-text-stroke:0.75px #ffffff;">görüntüleyebilir, düzenleyebilir yetki</div>
<div class="t" style="left:1275.00px;top:866.53px;font-size:23px;color:#ffffff;transform-origin:0 0;transform:scaleX(1.1775);-webkit-text-stroke:0.75px #ffffff;">verebilirsiniz. Kullanıcılara iş atayabilir sohbetleri</div>
<div class="t" style="left:1439.20px;top:898.53px;font-size:23px;color:#ffffff;transform-origin:0 0;transform:scaleX(1.2121);-webkit-text-stroke:0.75px #ffffff;">görüntüleyebilirsiniz.</div>
</body></html>
